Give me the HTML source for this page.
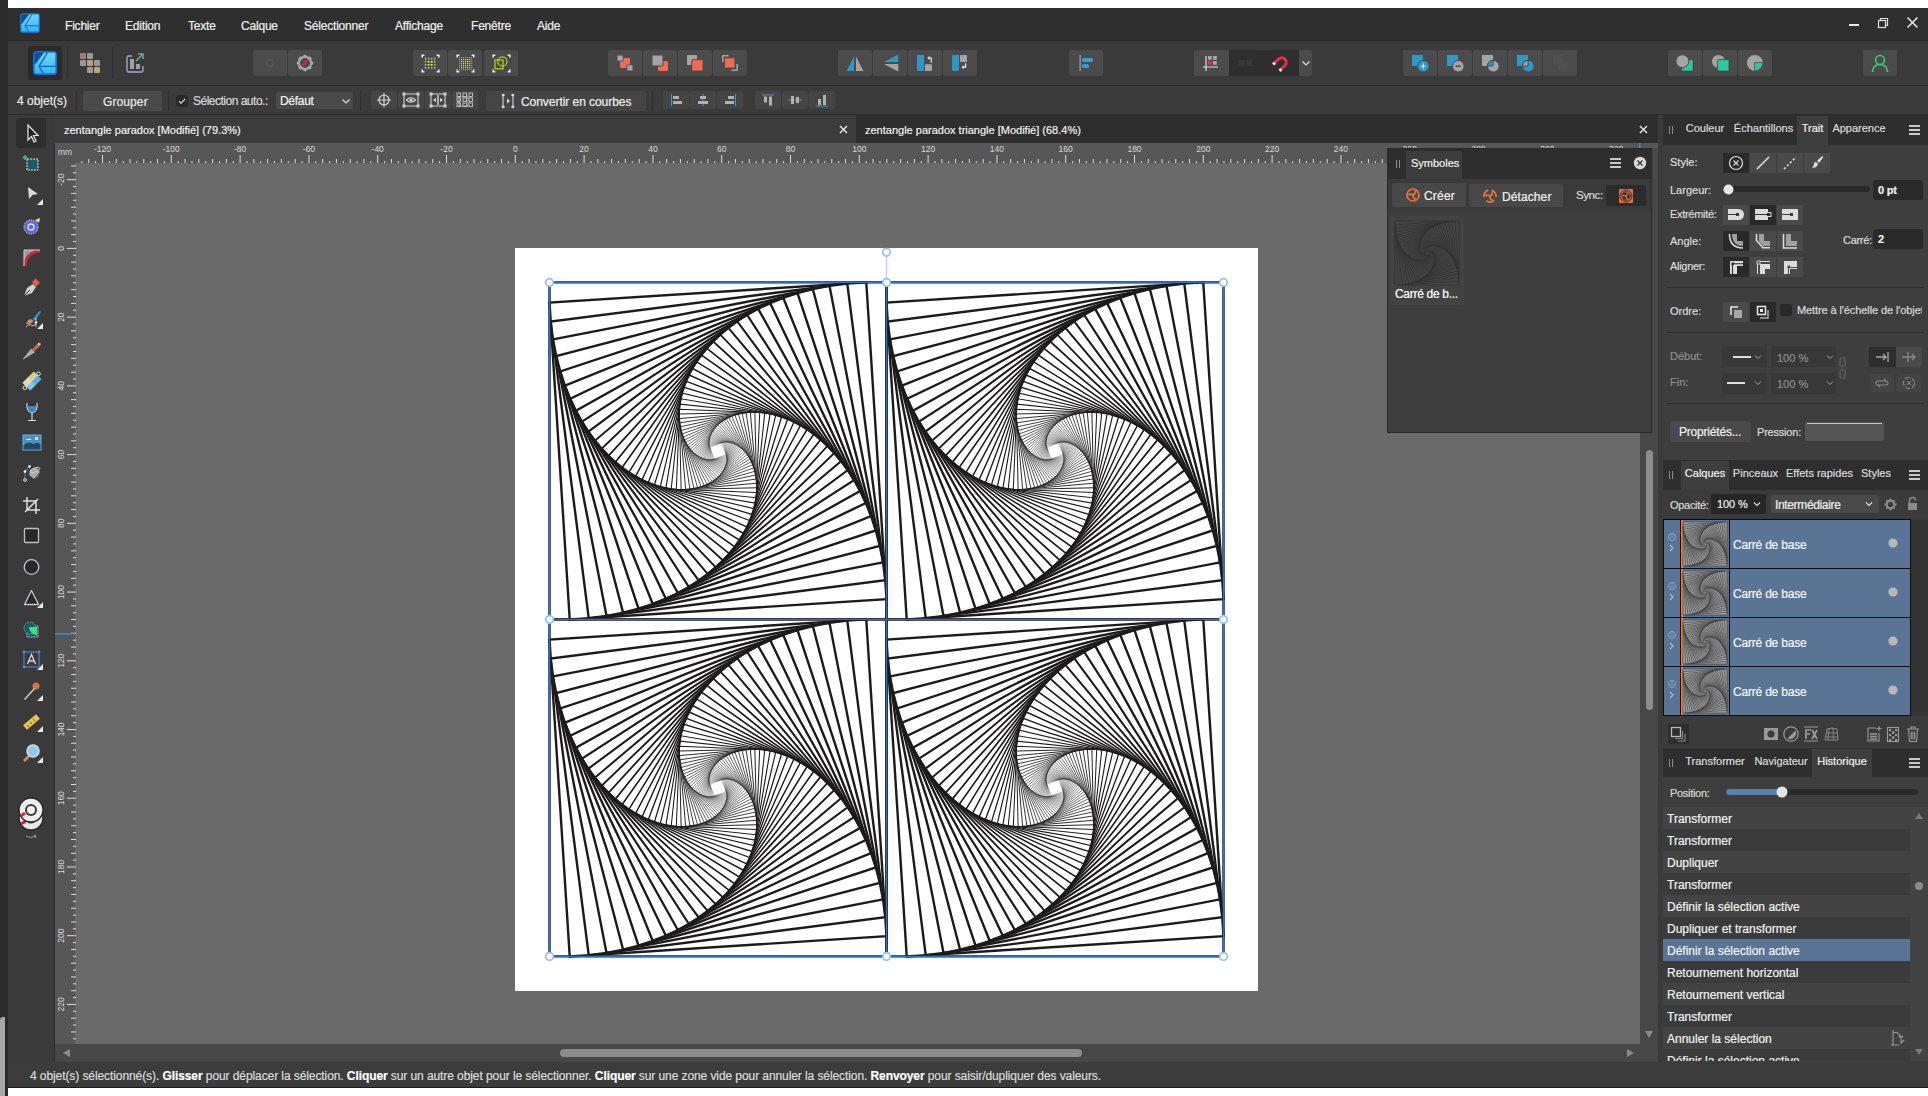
<!DOCTYPE html><html><head><meta charset="utf-8"><style>
html,body{margin:0;padding:0;width:1928px;height:1096px;overflow:hidden;background:#2b2b2b;font-family:"Liberation Sans",sans-serif;}
div{box-sizing:border-box;-webkit-text-stroke:0.2px currentColor;}
svg{position:absolute;overflow:visible}
</style></head><body><svg width="0" height="0" style="position:absolute;left:0;top:0"><defs><g id="tile" fill="none" stroke="#1c1a1a" stroke-linejoin="miter"><path d="M0.00,0.00 L0.00,337.00 L337.00,337.00 L337.00,0.00Z" stroke-width="2.400"/><path d="M0.00,20.22 L20.22,337.00 L337.00,316.78 L316.78,0.00Z" stroke-width="2.400"/><path d="M1.21,39.23 L39.23,335.79 L335.79,297.77 L297.77,1.21Z" stroke-width="2.400"/><path d="M3.49,57.02 L57.02,333.51 L333.51,279.98 L279.98,3.49Z" stroke-width="2.400"/><path d="M6.71,73.61 L73.61,330.29 L330.29,263.39 L263.39,6.71Z" stroke-width="2.400"/><path d="M10.72,89.01 L89.01,326.28 L326.28,247.99 L247.99,10.72Z" stroke-width="2.400"/><path d="M15.42,103.25 L103.25,321.58 L321.58,233.75 L233.75,15.42Z" stroke-width="2.400"/><path d="M20.69,116.35 L116.35,316.31 L316.31,220.65 L220.65,20.69Z" stroke-width="2.400"/><path d="M26.43,128.34 L128.34,310.57 L310.57,208.66 L208.66,26.43Z" stroke-width="2.296"/><path d="M32.54,139.28 L139.28,304.46 L304.46,197.72 L197.72,32.54Z" stroke-width="2.182"/><path d="M38.95,149.19 L149.19,298.05 L298.05,187.81 L187.81,38.95Z" stroke-width="2.074"/><path d="M45.56,158.12 L158.12,291.44 L291.44,178.88 L178.88,45.56Z" stroke-width="1.971"/><path d="M52.31,166.12 L166.12,284.69 L284.69,170.88 L170.88,52.31Z" stroke-width="1.873"/><path d="M59.14,173.23 L173.23,277.86 L277.86,163.77 L163.77,59.14Z" stroke-width="1.780"/><path d="M65.99,179.51 L179.51,271.01 L271.01,157.49 L157.49,65.99Z" stroke-width="1.692"/><path d="M72.80,185.00 L185.00,264.20 L264.20,152.00 L152.00,72.80Z" stroke-width="1.608"/><path d="M79.53,189.75 L189.75,257.47 L257.47,147.25 L147.25,79.53Z" stroke-width="1.528"/><path d="M86.14,193.82 L193.82,250.86 L250.86,143.18 L143.18,86.14Z" stroke-width="1.452"/><path d="M92.61,197.24 L197.24,244.39 L244.39,139.76 L139.76,92.61Z" stroke-width="1.380"/><path d="M98.88,200.07 L200.07,238.12 L238.12,136.93 L136.93,98.88Z" stroke-width="1.312"/><path d="M104.95,202.35 L202.35,232.05 L232.05,134.65 L134.65,104.95Z" stroke-width="1.247"/><path d="M110.80,204.13 L204.13,226.20 L226.20,132.87 L132.87,110.80Z" stroke-width="1.185"/><path d="M116.40,205.46 L205.46,220.60 L220.60,131.54 L131.54,116.40Z" stroke-width="1.126"/><path d="M121.74,206.37 L206.37,215.26 L215.26,130.63 L130.63,121.74Z" stroke-width="1.070"/><path d="M126.82,206.90 L206.90,210.18 L210.18,130.10 L130.10,126.82Z" stroke-width="1.017"/><path d="M131.62,207.10 L207.10,205.38 L205.38,129.90 L129.90,131.62Z" stroke-width="0.967"/><path d="M136.15,206.99 L206.99,200.85 L200.85,130.01 L130.01,136.15Z" stroke-width="0.919"/><path d="M140.40,206.62 L206.62,196.60 L196.60,130.38 L130.38,140.40Z" stroke-width="0.873"/><path d="M144.38,206.02 L206.02,192.62 L192.62,130.98 L130.98,144.38Z" stroke-width="0.830"/><path d="M148.07,205.22 L205.22,188.93 L188.93,131.78 L131.78,148.07Z" stroke-width="0.789"/><path d="M151.50,204.24 L204.24,185.50 L185.50,132.76 L132.76,151.50Z" stroke-width="0.750"/><path d="M154.67,203.12 L203.12,182.33 L182.33,133.88 L133.88,154.67Z" stroke-width="0.713"/><path d="M157.57,201.87 L201.87,179.43 L179.43,135.13 L135.13,157.57Z" stroke-width="0.677"/><path d="M160.23,200.52 L200.52,176.77 L176.77,136.48 L136.48,160.23Z" stroke-width="0.644"/><path d="M162.65,199.10 L199.10,174.35 L174.35,137.90 L137.90,162.65Z" stroke-width="0.612"/><path d="M164.84,197.61 L197.61,172.16 L172.16,139.39 L139.39,164.84Z" stroke-width="0.581"/><path d="M166.80,196.09 L196.09,170.20 L170.20,140.91 L140.91,166.80Z" stroke-width="0.553"/><path d="M168.56,194.53 L194.53,168.44 L168.44,142.47 L142.47,168.56Z" stroke-width="0.525"/><path d="M170.12,192.97 L192.97,166.88 L166.88,144.03 L144.03,170.12Z" stroke-width="0.499"/><path d="M171.49,191.40 L191.40,165.51 L165.51,145.60 L145.60,171.49Z" stroke-width="0.474"/><path d="M172.68,189.85 L189.85,164.32 L164.32,147.15 L147.15,172.68Z" stroke-width="0.451"/><path d="M173.71,188.32 L188.32,163.29 L163.29,148.68 L148.68,173.71Z" stroke-width="0.428"/><path d="M174.59,186.81 L186.81,162.41 L162.41,150.19 L150.19,174.59Z" stroke-width="0.407"/><path d="M175.32,185.35 L185.35,161.68 L161.68,151.65 L151.65,175.32Z" stroke-width="0.387"/><path d="M175.93,183.93 L183.93,161.07 L161.07,153.07 L153.07,175.93Z" stroke-width="0.368"/><path d="M176.41,182.56 L182.56,160.59 L160.59,154.44 L154.44,176.41Z" stroke-width="0.350"/><path d="M176.77,181.24 L181.24,160.23 L160.23,155.76 L155.76,176.77Z" stroke-width="0.332"/><path d="M177.04,179.98 L179.98,159.96 L159.96,157.02 L157.02,177.04Z" stroke-width="0.316"/><path d="M177.22,178.78 L178.78,159.78 L159.78,158.22 L158.22,177.22Z" stroke-width="0.300"/><path d="M177.31,177.64 L177.64,159.69 L159.69,159.36 L159.36,177.31Z" stroke-width="0.285"/><path d="M177.33,176.56 L176.56,159.67 L159.67,160.44 L160.44,177.33Z" stroke-width="0.271"/><path d="M177.29,175.55 L175.55,159.71 L159.71,161.45 L161.45,177.29Z" stroke-width="0.258"/><path d="M177.18,174.60 L174.60,159.82 L159.82,162.40 L162.40,177.18Z" stroke-width="0.245"/><path d="M177.03,173.71 L173.71,159.97 L159.97,163.29 L163.29,177.03Z" stroke-width="0.233"/><path d="M176.83,172.89 L172.89,160.17 L160.17,164.11 L164.11,176.83Z" stroke-width="0.221"/><path d="M176.59,172.12 L172.12,160.41 L160.41,164.88 L164.88,176.59Z" stroke-width="0.210"/></g><g id="tileg" fill="none" stroke="#202020" stroke-linejoin="miter"><path d="M0.00,0.00 L0.00,337.00 L337.00,337.00 L337.00,0.00Z" stroke-width="4.000"/><path d="M0.00,20.22 L20.22,337.00 L337.00,316.78 L316.78,0.00Z" stroke-width="4.000"/><path d="M1.21,39.23 L39.23,335.79 L335.79,297.77 L297.77,1.21Z" stroke-width="4.000"/><path d="M3.49,57.02 L57.02,333.51 L333.51,279.98 L279.98,3.49Z" stroke-width="4.000"/><path d="M6.71,73.61 L73.61,330.29 L330.29,263.39 L263.39,6.71Z" stroke-width="4.000"/><path d="M10.72,89.01 L89.01,326.28 L326.28,247.99 L247.99,10.72Z" stroke-width="4.000"/><path d="M15.42,103.25 L103.25,321.58 L321.58,233.75 L233.75,15.42Z" stroke-width="4.000"/><path d="M20.69,116.35 L116.35,316.31 L316.31,220.65 L220.65,20.69Z" stroke-width="4.000"/><path d="M26.43,128.34 L128.34,310.57 L310.57,208.66 L208.66,26.43Z" stroke-width="3.826"/><path d="M32.54,139.28 L139.28,304.46 L304.46,197.72 L197.72,32.54Z" stroke-width="3.636"/><path d="M38.95,149.19 L149.19,298.05 L298.05,187.81 L187.81,38.95Z" stroke-width="3.456"/><path d="M45.56,158.12 L158.12,291.44 L291.44,178.88 L178.88,45.56Z" stroke-width="3.285"/><path d="M52.31,166.12 L166.12,284.69 L284.69,170.88 L170.88,52.31Z" stroke-width="3.122"/><path d="M59.14,173.23 L173.23,277.86 L277.86,163.77 L163.77,59.14Z" stroke-width="2.967"/><path d="M65.99,179.51 L179.51,271.01 L271.01,157.49 L157.49,65.99Z" stroke-width="2.820"/><path d="M72.80,185.00 L185.00,264.20 L264.20,152.00 L152.00,72.80Z" stroke-width="2.680"/><path d="M79.53,189.75 L189.75,257.47 L257.47,147.25 L147.25,79.53Z" stroke-width="2.547"/><path d="M86.14,193.82 L193.82,250.86 L250.86,143.18 L143.18,86.14Z" stroke-width="2.421"/><path d="M92.61,197.24 L197.24,244.39 L244.39,139.76 L139.76,92.61Z" stroke-width="2.301"/><path d="M98.88,200.07 L200.07,238.12 L238.12,136.93 L136.93,98.88Z" stroke-width="2.187"/><path d="M104.95,202.35 L202.35,232.05 L232.05,134.65 L134.65,104.95Z" stroke-width="2.078"/><path d="M110.80,204.13 L204.13,226.20 L226.20,132.87 L132.87,110.80Z" stroke-width="1.975"/><path d="M116.40,205.46 L205.46,220.60 L220.60,131.54 L131.54,116.40Z" stroke-width="1.877"/><path d="M121.74,206.37 L206.37,215.26 L215.26,130.63 L130.63,121.74Z" stroke-width="1.784"/><path d="M126.82,206.90 L206.90,210.18 L210.18,130.10 L130.10,126.82Z" stroke-width="1.696"/><path d="M131.62,207.10 L207.10,205.38 L205.38,129.90 L129.90,131.62Z" stroke-width="1.611"/><path d="M136.15,206.99 L206.99,200.85 L200.85,130.01 L130.01,136.15Z" stroke-width="1.532"/><path d="M140.40,206.62 L206.62,196.60 L196.60,130.38 L130.38,140.40Z" stroke-width="1.456"/><path d="M144.38,206.02 L206.02,192.62 L192.62,130.98 L130.98,144.38Z" stroke-width="1.383"/><path d="M148.07,205.22 L205.22,188.93 L188.93,131.78 L131.78,148.07Z" stroke-width="1.315"/><path d="M151.50,204.24 L204.24,185.50 L185.50,132.76 L132.76,151.50Z" stroke-width="1.250"/><path d="M154.67,203.12 L203.12,182.33 L182.33,133.88 L133.88,154.67Z" stroke-width="1.188"/><path d="M157.57,201.87 L201.87,179.43 L179.43,135.13 L135.13,157.57Z" stroke-width="1.129"/><path d="M160.23,200.52 L200.52,176.77 L176.77,136.48 L136.48,160.23Z" stroke-width="1.073"/><path d="M162.65,199.10 L199.10,174.35 L174.35,137.90 L137.90,162.65Z" stroke-width="1.020"/><path d="M164.84,197.61 L197.61,172.16 L172.16,139.39 L139.39,164.84Z" stroke-width="0.969"/><path d="M166.80,196.09 L196.09,170.20 L170.20,140.91 L140.91,166.80Z" stroke-width="0.921"/><path d="M168.56,194.53 L194.53,168.44 L168.44,142.47 L142.47,168.56Z" stroke-width="0.875"/><path d="M170.12,192.97 L192.97,166.88 L166.88,144.03 L144.03,170.12Z" stroke-width="0.832"/><path d="M171.49,191.40 L191.40,165.51 L165.51,145.60 L145.60,171.49Z" stroke-width="0.791"/><path d="M172.68,189.85 L189.85,164.32 L164.32,147.15 L147.15,172.68Z" stroke-width="0.751"/><path d="M173.71,188.32 L188.32,163.29 L163.29,148.68 L148.68,173.71Z" stroke-width="0.714"/><path d="M174.59,186.81 L186.81,162.41 L162.41,150.19 L150.19,174.59Z" stroke-width="0.679"/><path d="M175.32,185.35 L185.35,161.68 L161.68,151.65 L151.65,175.32Z" stroke-width="0.645"/><path d="M175.93,183.93 L183.93,161.07 L161.07,153.07 L153.07,175.93Z" stroke-width="0.613"/><path d="M176.41,182.56 L182.56,160.59 L160.59,154.44 L154.44,176.41Z" stroke-width="0.583"/><path d="M176.77,181.24 L181.24,160.23 L160.23,155.76 L155.76,176.77Z" stroke-width="0.554"/><path d="M177.04,179.98 L179.98,159.96 L159.96,157.02 L157.02,177.04Z" stroke-width="0.526"/><path d="M177.22,178.78 L178.78,159.78 L159.78,158.22 L158.22,177.22Z" stroke-width="0.500"/><path d="M177.31,177.64 L177.64,159.69 L159.69,159.36 L159.36,177.31Z" stroke-width="0.475"/><path d="M177.33,176.56 L176.56,159.67 L159.67,160.44 L160.44,177.33Z" stroke-width="0.452"/><path d="M177.29,175.55 L175.55,159.71 L159.71,161.45 L161.45,177.29Z" stroke-width="0.429"/><path d="M177.18,174.60 L174.60,159.82 L159.82,162.40 L162.40,177.18Z" stroke-width="0.408"/><path d="M177.03,173.71 L173.71,159.97 L159.97,163.29 L163.29,177.03Z" stroke-width="0.388"/><path d="M176.83,172.89 L172.89,160.17 L160.17,164.11 L164.11,176.83Z" stroke-width="0.369"/><path d="M176.59,172.12 L172.12,160.41 L160.41,164.88 L164.88,176.59Z" stroke-width="0.350"/></g><g id="tileg2" fill="none" stroke="#404040" stroke-linejoin="miter"><path d="M0.00,0.00 L0.00,337.00 L337.00,337.00 L337.00,0.00Z" stroke-width="5.000"/><path d="M0.00,20.22 L20.22,337.00 L337.00,316.78 L316.78,0.00Z" stroke-width="5.000"/><path d="M1.21,39.23 L39.23,335.79 L335.79,297.77 L297.77,1.21Z" stroke-width="5.000"/><path d="M3.49,57.02 L57.02,333.51 L333.51,279.98 L279.98,3.49Z" stroke-width="5.000"/><path d="M6.71,73.61 L73.61,330.29 L330.29,263.39 L263.39,6.71Z" stroke-width="5.000"/><path d="M10.72,89.01 L89.01,326.28 L326.28,247.99 L247.99,10.72Z" stroke-width="5.000"/><path d="M15.42,103.25 L103.25,321.58 L321.58,233.75 L233.75,15.42Z" stroke-width="5.000"/><path d="M20.69,116.35 L116.35,316.31 L316.31,220.65 L220.65,20.69Z" stroke-width="5.000"/><path d="M26.43,128.34 L128.34,310.57 L310.57,208.66 L208.66,26.43Z" stroke-width="4.783"/><path d="M32.54,139.28 L139.28,304.46 L304.46,197.72 L197.72,32.54Z" stroke-width="4.545"/><path d="M38.95,149.19 L149.19,298.05 L298.05,187.81 L187.81,38.95Z" stroke-width="4.320"/><path d="M45.56,158.12 L158.12,291.44 L291.44,178.88 L178.88,45.56Z" stroke-width="4.106"/><path d="M52.31,166.12 L166.12,284.69 L284.69,170.88 L170.88,52.31Z" stroke-width="3.902"/><path d="M59.14,173.23 L173.23,277.86 L277.86,163.77 L163.77,59.14Z" stroke-width="3.709"/><path d="M65.99,179.51 L179.51,271.01 L271.01,157.49 L157.49,65.99Z" stroke-width="3.525"/><path d="M72.80,185.00 L185.00,264.20 L264.20,152.00 L152.00,72.80Z" stroke-width="3.350"/><path d="M79.53,189.75 L189.75,257.47 L257.47,147.25 L147.25,79.53Z" stroke-width="3.184"/><path d="M86.14,193.82 L193.82,250.86 L250.86,143.18 L143.18,86.14Z" stroke-width="3.026"/><path d="M92.61,197.24 L197.24,244.39 L244.39,139.76 L139.76,92.61Z" stroke-width="2.876"/><path d="M98.88,200.07 L200.07,238.12 L238.12,136.93 L136.93,98.88Z" stroke-width="2.733"/><path d="M104.95,202.35 L202.35,232.05 L232.05,134.65 L134.65,104.95Z" stroke-width="2.598"/><path d="M110.80,204.13 L204.13,226.20 L226.20,132.87 L132.87,110.80Z" stroke-width="2.469"/><path d="M116.40,205.46 L205.46,220.60 L220.60,131.54 L131.54,116.40Z" stroke-width="2.346"/><path d="M121.74,206.37 L206.37,215.26 L215.26,130.63 L130.63,121.74Z" stroke-width="2.230"/><path d="M126.82,206.90 L206.90,210.18 L210.18,130.10 L130.10,126.82Z" stroke-width="2.119"/><path d="M131.62,207.10 L207.10,205.38 L205.38,129.90 L129.90,131.62Z" stroke-width="2.014"/><path d="M136.15,206.99 L206.99,200.85 L200.85,130.01 L130.01,136.15Z" stroke-width="1.914"/><path d="M140.40,206.62 L206.62,196.60 L196.60,130.38 L130.38,140.40Z" stroke-width="1.819"/><path d="M144.38,206.02 L206.02,192.62 L192.62,130.98 L130.98,144.38Z" stroke-width="1.729"/><path d="M148.07,205.22 L205.22,188.93 L188.93,131.78 L131.78,148.07Z" stroke-width="1.643"/><path d="M151.50,204.24 L204.24,185.50 L185.50,132.76 L132.76,151.50Z" stroke-width="1.562"/><path d="M154.67,203.12 L203.12,182.33 L182.33,133.88 L133.88,154.67Z" stroke-width="1.484"/><path d="M157.57,201.87 L201.87,179.43 L179.43,135.13 L135.13,157.57Z" stroke-width="1.411"/><path d="M160.23,200.52 L200.52,176.77 L176.77,136.48 L136.48,160.23Z" stroke-width="1.341"/><path d="M162.65,199.10 L199.10,174.35 L174.35,137.90 L137.90,162.65Z" stroke-width="1.274"/><path d="M164.84,197.61 L197.61,172.16 L172.16,139.39 L139.39,164.84Z" stroke-width="1.211"/><path d="M166.80,196.09 L196.09,170.20 L170.20,140.91 L140.91,166.80Z" stroke-width="1.151"/><path d="M168.56,194.53 L194.53,168.44 L168.44,142.47 L142.47,168.56Z" stroke-width="1.094"/><path d="M170.12,192.97 L192.97,166.88 L166.88,144.03 L144.03,170.12Z" stroke-width="1.040"/><path d="M171.49,191.40 L191.40,165.51 L165.51,145.60 L145.60,171.49Z" stroke-width="0.988"/><path d="M172.68,189.85 L189.85,164.32 L164.32,147.15 L147.15,172.68Z" stroke-width="0.939"/><path d="M173.71,188.32 L188.32,163.29 L163.29,148.68 L148.68,173.71Z" stroke-width="0.893"/><path d="M174.59,186.81 L186.81,162.41 L162.41,150.19 L150.19,174.59Z" stroke-width="0.848"/><path d="M175.32,185.35 L185.35,161.68 L161.68,151.65 L151.65,175.32Z" stroke-width="0.806"/><path d="M175.93,183.93 L183.93,161.07 L161.07,153.07 L153.07,175.93Z" stroke-width="0.766"/><path d="M176.41,182.56 L182.56,160.59 L160.59,154.44 L154.44,176.41Z" stroke-width="0.728"/><path d="M176.77,181.24 L181.24,160.23 L160.23,155.76 L155.76,176.77Z" stroke-width="0.692"/><path d="M177.04,179.98 L179.98,159.96 L159.96,157.02 L157.02,177.04Z" stroke-width="0.658"/><path d="M177.22,178.78 L178.78,159.78 L159.78,158.22 L158.22,177.22Z" stroke-width="0.625"/><path d="M177.31,177.64 L177.64,159.69 L159.69,159.36 L159.36,177.31Z" stroke-width="0.594"/><path d="M177.33,176.56 L176.56,159.67 L159.67,160.44 L160.44,177.33Z" stroke-width="0.565"/><path d="M177.29,175.55 L175.55,159.71 L159.71,161.45 L161.45,177.29Z" stroke-width="0.537"/><path d="M177.18,174.60 L174.60,159.82 L159.82,162.40 L162.40,177.18Z" stroke-width="0.510"/><path d="M177.03,173.71 L173.71,159.97 L159.97,163.29 L163.29,177.03Z" stroke-width="0.485"/><path d="M176.83,172.89 L172.89,160.17 L160.17,164.11 L164.11,176.83Z" stroke-width="0.461"/><path d="M176.59,172.12 L172.12,160.41 L160.41,164.88 L164.88,176.59Z" stroke-width="0.438"/></g></defs></svg><div style="position:absolute;left:0px;top:0px;width:1928px;height:1096px;background:#2b2b2b;"></div><div style="position:absolute;left:8px;top:0px;width:1920px;height:8px;background:#ffffff;"></div><div style="position:absolute;left:8px;top:8px;width:1920px;height:32px;background:#2f2f2f;"></div><div style="position:absolute;left:8px;top:40px;width:1920px;height:1px;background:#262626;"></div><div style="position:absolute;left:8px;top:41px;width:1920px;height:44px;background:#3a3a3a;"></div><div style="position:absolute;left:8px;top:85px;width:1920px;height:1px;background:#2a2a2a;"></div><div style="position:absolute;left:8px;top:86px;width:1920px;height:28px;background:#3b3b3b;"></div><div style="position:absolute;left:8px;top:114px;width:1920px;height:1px;background:#2a2a2a;"></div><div style="position:absolute;left:8px;top:115px;width:47px;height:947px;background:#3a3a3a;"></div><div style="position:absolute;left:55px;top:115px;width:801px;height:28px;background:#3c3c3c;"></div><div style="position:absolute;left:856px;top:115px;width:802px;height:28px;background:#2e2e2e;"></div><div style="position:absolute;left:55px;top:143px;width:1603px;height:20px;background:#575757;"></div><div style="position:absolute;left:55px;top:163px;width:20px;height:881px;background:#575757;"></div><div style="position:absolute;left:75px;top:163px;width:1565px;height:881px;background:#6a6a6a;"></div><div style="position:absolute;left:1640px;top:163px;width:18px;height:899px;background:#474747;"></div><div style="position:absolute;left:55px;top:1044px;width:1603px;height:18px;background:#474747;"></div><div style="position:absolute;left:8px;top:1062px;width:1920px;height:25px;background:#3c3c3c;"></div><div style="position:absolute;left:8px;top:1087px;width:1920px;height:1px;background:#1a1a1a;"></div><div style="position:absolute;left:8px;top:1088px;width:1920px;height:8px;background:#ffffff;"></div><div style="position:absolute;left:1658px;top:115px;width:270px;height:947px;background:#3e3e3e;"></div><div style="position:absolute;left:515px;top:248px;width:743px;height:743px;background:#ffffff;"></div><svg style="left:0;top:0" width="1928" height="1096"><use href="#tile" transform="translate(549.5,282.4)"/><use href="#tile" transform="translate(886.5,282.4)"/><use href="#tile" transform="translate(549.5,619.4)"/><use href="#tile" transform="translate(886.5,619.4)"/></svg><svg style="left:20px;top:13px;" width="20" height="20" viewBox="0 0 20 20"><defs><linearGradient id="lg20" x1="0" y1="0" x2="0" y2="1"><stop offset="0" stop-color="#6fd8fd"/><stop offset="1" stop-color="#34b6f2"/></linearGradient></defs>
<rect x="0" y="0" width="20" height="20" rx="3.20" fill="#1b6fc8"/>
<path d="M1.40,1.40 H9.20 L1.40,11.60Z" fill="#0f4f94"/>
<path d="M9.20,1.40 H18.60 V18.60 H1.40 V11.60Z" fill="url(#lg20)"/>
<path d="M12.00,1.40 L5.00,12.80 L8.40,18.60 M5.00,12.80 H18.60" fill="none" stroke="#1560b8" stroke-width="1.00"/></svg><div style="position:absolute;left:65px;top:19.84px;font-size:12px;line-height:1;white-space:nowrap;color:#f0f0f0;letter-spacing:-0.2px;">Fichier</div><div style="position:absolute;left:125px;top:19.84px;font-size:12px;line-height:1;white-space:nowrap;color:#f0f0f0;letter-spacing:-0.2px;">Edition</div><div style="position:absolute;left:188px;top:19.84px;font-size:12px;line-height:1;white-space:nowrap;color:#f0f0f0;letter-spacing:-0.2px;">Texte</div><div style="position:absolute;left:241px;top:19.84px;font-size:12px;line-height:1;white-space:nowrap;color:#f0f0f0;letter-spacing:-0.2px;">Calque</div><div style="position:absolute;left:304px;top:19.84px;font-size:12px;line-height:1;white-space:nowrap;color:#f0f0f0;letter-spacing:-0.2px;">Sélectionner</div><div style="position:absolute;left:395px;top:19.84px;font-size:12px;line-height:1;white-space:nowrap;color:#f0f0f0;letter-spacing:-0.2px;">Affichage</div><div style="position:absolute;left:471px;top:19.84px;font-size:12px;line-height:1;white-space:nowrap;color:#f0f0f0;letter-spacing:-0.2px;">Fenêtre</div><div style="position:absolute;left:537px;top:19.84px;font-size:12px;line-height:1;white-space:nowrap;color:#f0f0f0;letter-spacing:-0.2px;">Aide</div><div style="position:absolute;left:1849px;top:24px;width:10px;height:2px;background:#e8e8e8;"></div><svg style="left:1877px;top:17px;" width="12" height="12" viewBox="0 0 12 12"><rect x="1.5" y="3.5" width="7" height="7" fill="none" stroke="#e0e0e0" stroke-width="1.2"/><path d="M3.5,3.5 V1.5 H10.5 V8.5 H8.5" fill="none" stroke="#e0e0e0" stroke-width="1.2"/></svg><svg style="left:1906px;top:16px;" width="13" height="13" viewBox="0 0 13 13"><path d="M1.5,1.5 L11.5,11.5 M11.5,1.5 L1.5,11.5" stroke="#e8e8e8" stroke-width="1.5"/></svg><div style="position:absolute;left:28px;top:46px;width:34px;height:34px;background:#2b2b2b;border-radius:2px;"></div><svg style="left:33px;top:51px;" width="24" height="24" viewBox="0 0 24 24"><defs><linearGradient id="lg33" x1="0" y1="0" x2="0" y2="1"><stop offset="0" stop-color="#6fd8fd"/><stop offset="1" stop-color="#34b6f2"/></linearGradient></defs>
<rect x="0" y="0" width="24" height="24" rx="3.84" fill="#1b6fc8"/>
<path d="M1.68,1.68 H11.04 L1.68,13.92Z" fill="#0f4f94"/>
<path d="M11.04,1.68 H22.32 V22.32 H1.68 V13.92Z" fill="url(#lg33)"/>
<path d="M14.40,1.68 L6.00,15.36 L10.08,22.32 M6.00,15.36 H22.32" fill="none" stroke="#1560b8" stroke-width="1.20"/></svg><div style="position:absolute;left:67px;top:47px;width:1px;height:32px;background:#2e2e2e;"></div><div style="position:absolute;left:80px;top:53px;width:5.5px;height:5.5px;background:#a07a80;border-radius:1px;"></div><div style="position:absolute;left:87px;top:53px;width:5.5px;height:5.5px;background:#9a9a9a;border-radius:1px;"></div><div style="position:absolute;left:80px;top:60px;width:5.5px;height:5.5px;background:#9a9a9a;border-radius:1px;"></div><div style="position:absolute;left:87px;top:60px;width:5.5px;height:5.5px;background:#b8a080;border-radius:1px;"></div><div style="position:absolute;left:94px;top:60px;width:5.5px;height:5.5px;background:#9a9a9a;border-radius:1px;"></div><div style="position:absolute;left:87px;top:67px;width:5.5px;height:5.5px;background:#9a9a9a;border-radius:1px;"></div><div style="position:absolute;left:94px;top:67px;width:5.5px;height:5.5px;background:#b8a878;border-radius:1px;"></div><div style="position:absolute;left:112px;top:47px;width:1px;height:32px;background:#2e2e2e;"></div><svg style="left:124px;top:52px;" width="22" height="22" viewBox="0 0 22 22"><path d="M3,6 V18 Q3,20 5,20 H17 Q19,20 19,18 V14" fill="none" stroke="#8c8cb0" stroke-width="1.8"/><path d="M3,6 Q3,4 5,4 H8" fill="none" stroke="#8c8cb0" stroke-width="1.8"/><rect x="6" y="7" width="4" height="10" fill="#a0a0a0"/><rect x="12" y="12" width="4" height="5" fill="#a0a0a0"/><path d="M12,9 L19,2 M14,2 H19 V7" fill="none" stroke="#6fa090" stroke-width="1.6"/></svg><div style="position:absolute;left:253px;top:50px;width:34px;height:26px;background:#4b4b4b;border-radius:2px;"></div><div style="position:absolute;left:288px;top:50px;width:34px;height:26px;background:#4b4b4b;border-radius:2px;"></div><svg style="left:262px;top:55px;" width="16" height="16" viewBox="0 0 16 16"><circle cx="8" cy="8" r="3.5" fill="none" stroke="#585858" stroke-width="1.5"/></svg><svg style="left:296px;top:54px;" width="18" height="18" viewBox="0 0 18 18"><circle cx="9" cy="9" r="6.2" fill="none" stroke="#a8a8a8" stroke-width="2.2"/><g fill="#a8a8a8"><rect x="7.5" y="0.8" width="3" height="3.2" transform="rotate(0 9 9)"/><rect x="7.5" y="0.8" width="3" height="3.2" transform="rotate(45 9 9)"/><rect x="7.5" y="0.8" width="3" height="3.2" transform="rotate(90 9 9)"/><rect x="7.5" y="0.8" width="3" height="3.2" transform="rotate(135 9 9)"/><rect x="7.5" y="0.8" width="3" height="3.2" transform="rotate(180 9 9)"/><rect x="7.5" y="0.8" width="3" height="3.2" transform="rotate(225 9 9)"/><rect x="7.5" y="0.8" width="3" height="3.2" transform="rotate(270 9 9)"/><rect x="7.5" y="0.8" width="3" height="3.2" transform="rotate(315 9 9)"/></g><path d="M6.3,11.7 L11.7,6.3" stroke="#e8203c" stroke-width="2.2"/></svg><div style="position:absolute;left:413px;top:50px;width:34px;height:26px;background:#4b4b4b;border-radius:2px;"></div><div style="position:absolute;left:448px;top:50px;width:34px;height:26px;background:#4b4b4b;border-radius:2px;"></div><div style="position:absolute;left:484px;top:50px;width:34px;height:26px;background:#4b4b4b;border-radius:2px;"></div><svg style="left:421px;top:54px;" width="19" height="19" viewBox="0 0 19 19"><path d="M1.2,3.4 V1.2 H3.4 M15.6,1.2 H17.8 V3.4 M17.8,15.6 V17.8 H15.6 M3.4,17.8 H1.2 V15.6" fill="none" stroke="#e8e8e8" stroke-width="1.6"/><rect x="3.70" y="3.80" width="1.75" height="1.75" fill="#a8a8a8"/><rect x="3.70" y="6.85" width="1.75" height="1.75" fill="#a8a8a8"/><rect x="3.70" y="9.90" width="1.75" height="1.75" fill="#a8a8a8"/><rect x="3.70" y="12.95" width="1.75" height="1.75" fill="#a8a8a8"/><rect x="6.75" y="3.80" width="1.75" height="1.75" fill="#a8a8a8"/><rect x="6.75" y="6.85" width="1.75" height="1.75" fill="#f0f830"/><rect x="6.75" y="9.90" width="1.75" height="1.75" fill="#f0f830"/><rect x="6.75" y="12.95" width="1.75" height="1.75" fill="#a8a8a8"/><rect x="9.80" y="3.80" width="1.75" height="1.75" fill="#a8a8a8"/><rect x="9.80" y="6.85" width="1.75" height="1.75" fill="#f0f830"/><rect x="9.80" y="9.90" width="1.75" height="1.75" fill="#f0f830"/><rect x="9.80" y="12.95" width="1.75" height="1.75" fill="#a8a8a8"/><rect x="12.85" y="3.80" width="1.75" height="1.75" fill="#a8a8a8"/><rect x="12.85" y="6.85" width="1.75" height="1.75" fill="#a8a8a8"/><rect x="12.85" y="9.90" width="1.75" height="1.75" fill="#a8a8a8"/><rect x="12.85" y="12.95" width="1.75" height="1.75" fill="#a8a8a8"/></svg><svg style="left:456px;top:54px;" width="19" height="19" viewBox="0 0 19 19"><path d="M1.2,3.4 V1.2 H3.4 M15.6,1.2 H17.8 V3.4 M17.8,15.6 V17.8 H15.6 M3.4,17.8 H1.2 V15.6" fill="none" stroke="#e8e8e8" stroke-width="1.6"/><rect x="3.00" y="3.10" width="1.1" height="1.1" fill="#a0a0a0"/><rect x="3.00" y="5.12" width="1.1" height="1.1" fill="#a0a0a0"/><rect x="3.00" y="7.14" width="1.1" height="1.1" fill="#a0a0a0"/><rect x="3.00" y="9.16" width="1.1" height="1.1" fill="#a0a0a0"/><rect x="3.00" y="11.18" width="1.1" height="1.1" fill="#a0a0a0"/><rect x="3.00" y="13.20" width="1.1" height="1.1" fill="#a0a0a0"/><rect x="3.00" y="15.22" width="1.1" height="1.1" fill="#a0a0a0"/><rect x="5.02" y="3.10" width="1.1" height="1.1" fill="#a0a0a0"/><rect x="5.02" y="5.12" width="1.1" height="1.1" fill="#f0f830"/><rect x="5.02" y="7.14" width="1.1" height="1.1" fill="#f0f830"/><rect x="5.02" y="9.16" width="1.1" height="1.1" fill="#f0f830"/><rect x="5.02" y="11.18" width="1.1" height="1.1" fill="#f0f830"/><rect x="5.02" y="13.20" width="1.1" height="1.1" fill="#f0f830"/><rect x="5.02" y="15.22" width="1.1" height="1.1" fill="#a0a0a0"/><rect x="7.04" y="3.10" width="1.1" height="1.1" fill="#a0a0a0"/><rect x="7.04" y="5.12" width="1.1" height="1.1" fill="#f0f830"/><rect x="7.04" y="7.14" width="1.1" height="1.1" fill="#f0f830"/><rect x="7.04" y="9.16" width="1.1" height="1.1" fill="#f0f830"/><rect x="7.04" y="11.18" width="1.1" height="1.1" fill="#f0f830"/><rect x="7.04" y="13.20" width="1.1" height="1.1" fill="#f0f830"/><rect x="7.04" y="15.22" width="1.1" height="1.1" fill="#a0a0a0"/><rect x="9.06" y="3.10" width="1.1" height="1.1" fill="#a0a0a0"/><rect x="9.06" y="5.12" width="1.1" height="1.1" fill="#f0f830"/><rect x="9.06" y="7.14" width="1.1" height="1.1" fill="#f0f830"/><rect x="9.06" y="9.16" width="1.1" height="1.1" fill="#f0f830"/><rect x="9.06" y="11.18" width="1.1" height="1.1" fill="#f0f830"/><rect x="9.06" y="13.20" width="1.1" height="1.1" fill="#f0f830"/><rect x="9.06" y="15.22" width="1.1" height="1.1" fill="#a0a0a0"/><rect x="11.08" y="3.10" width="1.1" height="1.1" fill="#a0a0a0"/><rect x="11.08" y="5.12" width="1.1" height="1.1" fill="#f0f830"/><rect x="11.08" y="7.14" width="1.1" height="1.1" fill="#f0f830"/><rect x="11.08" y="9.16" width="1.1" height="1.1" fill="#f0f830"/><rect x="11.08" y="11.18" width="1.1" height="1.1" fill="#f0f830"/><rect x="11.08" y="13.20" width="1.1" height="1.1" fill="#f0f830"/><rect x="11.08" y="15.22" width="1.1" height="1.1" fill="#a0a0a0"/><rect x="13.10" y="3.10" width="1.1" height="1.1" fill="#a0a0a0"/><rect x="13.10" y="5.12" width="1.1" height="1.1" fill="#f0f830"/><rect x="13.10" y="7.14" width="1.1" height="1.1" fill="#f0f830"/><rect x="13.10" y="9.16" width="1.1" height="1.1" fill="#f0f830"/><rect x="13.10" y="11.18" width="1.1" height="1.1" fill="#f0f830"/><rect x="13.10" y="13.20" width="1.1" height="1.1" fill="#f0f830"/><rect x="13.10" y="15.22" width="1.1" height="1.1" fill="#a0a0a0"/><rect x="15.12" y="3.10" width="1.1" height="1.1" fill="#a0a0a0"/><rect x="15.12" y="5.12" width="1.1" height="1.1" fill="#a0a0a0"/><rect x="15.12" y="7.14" width="1.1" height="1.1" fill="#a0a0a0"/><rect x="15.12" y="9.16" width="1.1" height="1.1" fill="#a0a0a0"/><rect x="15.12" y="11.18" width="1.1" height="1.1" fill="#a0a0a0"/><rect x="15.12" y="13.20" width="1.1" height="1.1" fill="#a0a0a0"/><rect x="15.12" y="15.22" width="1.1" height="1.1" fill="#a0a0a0"/></svg><svg style="left:492px;top:54px;" width="19" height="19" viewBox="0 0 19 19"><path d="M1.2,3.4 V1.2 H3.4 M15.6,1.2 H17.8 V3.4 M17.8,15.6 V17.8 H15.6 M3.4,17.8 H1.2 V15.6" fill="none" stroke="#e8e8e8" stroke-width="1.6"/><rect x="3" y="6" width="8" height="8.8" fill="none" stroke="#c0d020" stroke-width="1.2"/><circle cx="10.4" cy="7.4" r="4.6" fill="none" stroke="#c0d020" stroke-width="1.2"/></svg><div style="position:absolute;left:608px;top:50px;width:34px;height:26px;background:#4b4b4b;border-radius:2px;"></div><div style="position:absolute;left:643px;top:50px;width:34px;height:26px;background:#4b4b4b;border-radius:2px;"></div><div style="position:absolute;left:678px;top:50px;width:34px;height:26px;background:#4b4b4b;border-radius:2px;"></div><div style="position:absolute;left:713px;top:50px;width:34px;height:26px;background:#4b4b4b;border-radius:2px;"></div><svg style="left:616px;top:54px;" width="18" height="18" viewBox="0 0 18 18"><rect x="4" y="4" width="10" height="10" rx="1" fill="#f26a50"/><rect x="1" y="1" width="6.2" height="6.2" rx="1" fill="#a4a4a4" stroke="#4b4b4b" stroke-width="0.9"/><rect x="10.8" y="10.8" width="6.2" height="6.2" rx="1" fill="#a4a4a4" stroke="#4b4b4b" stroke-width="0.9"/></svg><svg style="left:651px;top:54px;" width="18" height="18" viewBox="0 0 18 18"><rect x="7" y="7" width="10" height="10" rx="1" fill="#f26a50"/><rect x="1" y="1" width="11" height="11" rx="1" fill="#a4a4a4" stroke="#4b4b4b" stroke-width="1"/></svg><svg style="left:686px;top:54px;" width="18" height="18" viewBox="0 0 18 18"><rect x="1" y="1" width="10" height="10" rx="1" fill="#a4a4a4"/><rect x="5.7" y="5.7" width="11.4" height="11.3" rx="1" fill="#f26a50" stroke="#4b4b4b" stroke-width="1"/></svg><svg style="left:721px;top:54px;" width="18" height="18" viewBox="0 0 18 18"><path d="M1.8,8 V2.3 Q1.8,1.8 2.3,1.8 H7.5" fill="none" stroke="#a4a4a4" stroke-width="1.6"/><path d="M16.2,10 V15.7 Q16.2,16.2 15.7,16.2 H10.5" fill="none" stroke="#a4a4a4" stroke-width="1.6"/><rect x="3.5" y="3.8" width="10.5" height="10.3" rx="1" fill="#f26a50" stroke="#4b4b4b" stroke-width="1"/></svg><div style="position:absolute;left:838px;top:50px;width:34px;height:26px;background:#4b4b4b;border-radius:2px;"></div><div style="position:absolute;left:873px;top:50px;width:34px;height:26px;background:#4b4b4b;border-radius:2px;"></div><div style="position:absolute;left:908px;top:50px;width:34px;height:26px;background:#4b4b4b;border-radius:2px;"></div><div style="position:absolute;left:943px;top:50px;width:34px;height:26px;background:#4b4b4b;border-radius:2px;"></div><svg style="left:846px;top:54px;" width="18" height="18" viewBox="0 0 18 18"><path d="M8,2.4 L0.6,17 H8Z" fill="#2b98c8"/><path d="M10,2.4 L17.4,17 H10Z" fill="#a4a4a4"/></svg><svg style="left:881px;top:54px;" width="18" height="18" viewBox="0 0 18 18"><path d="M17.3,0.6 L2.7,8 H17.3Z" fill="#2b98c8"/><path d="M2.7,10 H17.3 V17.4Z" fill="#a4a4a4"/></svg><svg style="left:916px;top:54px;" width="18" height="18" viewBox="0 0 18 18"><rect x="1" y="1.1" width="7.1" height="15.8" rx="1" fill="#2b98c8"/><rect x="9" y="10.2" width="7" height="6.7" rx="0.6" fill="#a4a4a4"/><path d="M15.3,8.7 V4 H12" fill="none" stroke="#e8e8e8" stroke-width="1.2"/><path d="M13.6,2 L11.3,4 L13.6,6Z" fill="#e8e8e8"/></svg><svg style="left:951px;top:54px;" width="18" height="18" viewBox="0 0 18 18"><rect x="1.1" y="1.1" width="6.9" height="15.8" rx="1" fill="#2b98c8"/><rect x="9" y="1.1" width="7" height="6.8" rx="0.6" fill="#a4a4a4"/><path d="M14.6,9.3 V13.2 H11.2" fill="none" stroke="#e8e8e8" stroke-width="1.2"/><path d="M12.8,11.2 L10.5,13.2 L12.8,15.2Z" fill="#e8e8e8"/></svg><div style="position:absolute;left:1069px;top:50px;width:34px;height:26px;background:#4b4b4b;border-radius:2px;"></div><svg style="left:1077px;top:54px;" width="18" height="18" viewBox="0 0 18 18"><rect x="2.5" y="1" width="1.2" height="16" fill="#a4a4a4"/><rect x="5" y="4" width="11" height="4" rx="1.5" fill="#2ea0d0"/><rect x="5" y="10" width="7" height="4" rx="1.5" fill="#2ea0d0"/></svg><div style="position:absolute;left:1194px;top:50px;width:35px;height:26px;background:#4b4b4b;border-radius:2px;"></div><div style="position:absolute;left:1229px;top:50px;width:35px;height:26px;background:#2e2e2e;border-radius:2px;"></div><div style="position:absolute;left:1264px;top:50px;width:35px;height:26px;background:#2e2e2e;border-radius:2px;"></div><div style="position:absolute;left:1299px;top:50px;width:13px;height:26px;background:#4b4b4b;border-radius:2px;"></div><svg style="left:1202px;top:54px;" width="18" height="18" viewBox="0 0 18 18"><path d="M4,2V17 M1,13H16" stroke="#e0e0e0" stroke-width="1.2"/><rect x="6" y="2" width="3.8" height="3.8" fill="#a4a4a4"/><rect x="11" y="2" width="3.8" height="3.8" fill="#a4a4a4"/><rect x="6" y="7" width="3.8" height="3.8" fill="#e0304a"/><rect x="11" y="7" width="3.8" height="3.8" fill="#a4a4a4"/></svg><svg style="left:1237px;top:54px;" width="18" height="18" viewBox="0 0 18 18"><rect x="1" y="6" width="7" height="6" fill="#383838"/><path d="M9,6H17L14,9L17,12H9Z" fill="#383838"/></svg><svg style="left:1272px;top:54px;" width="18" height="18" viewBox="0 0 18 18"><g transform="rotate(45 9 9)"><path d="M4.5,13 V8 A4.5,4.5 0 0 1 13.5,8 V13" fill="none" stroke="#e0304a" stroke-width="3"/><rect x="3" y="13" width="3" height="2.6" fill="#e8e8e8"/><rect x="12" y="13" width="3" height="2.6" fill="#e8e8e8"/></g></svg><svg style="left:1300px;top:57px;" width="12" height="12" viewBox="0 0 12 12"><path d="M2.5,4.5 L6,8 L9.5,4.5" fill="none" stroke="#e0e0e0" stroke-width="1.2"/></svg><div style="position:absolute;left:1403px;top:50px;width:34px;height:26px;background:#4b4b4b;border-radius:2px;"></div><div style="position:absolute;left:1438px;top:50px;width:34px;height:26px;background:#4b4b4b;border-radius:2px;"></div><div style="position:absolute;left:1473px;top:50px;width:34px;height:26px;background:#4b4b4b;border-radius:2px;"></div><div style="position:absolute;left:1508px;top:50px;width:34px;height:26px;background:#4b4b4b;border-radius:2px;"></div><div style="position:absolute;left:1543px;top:50px;width:34px;height:26px;background:#4b4b4b;border-radius:2px;"></div><svg style="left:1411px;top:54px;" width="18" height="18" viewBox="0 0 18 18"><rect x="1" y="1" width="11" height="11" fill="#2b9ac8"/><circle cx="12.3" cy="12.2" r="5.8" fill="#2b9ac8" stroke="#4b4b4b" stroke-width="1"/><path d="M12.3,9.6V14.8M9.7,12.2H14.9" stroke="#e8e8e8" stroke-width="1.1"/></svg><svg style="left:1446px;top:54px;" width="18" height="18" viewBox="0 0 18 18"><rect x="1" y="1" width="11" height="11" fill="#2b9ac8"/><circle cx="12.3" cy="12.2" r="5.8" fill="#a4a4a4" stroke="#4b4b4b" stroke-width="1"/><path d="M9.7,12.2H14.9" stroke="#3a3a3a" stroke-width="1.2"/></svg><svg style="left:1481px;top:54px;" width="18" height="18" viewBox="0 0 18 18"><rect x="1" y="1" width="11" height="11" fill="#a4a4a4"/><circle cx="12.3" cy="12.2" r="5.8" fill="#a4a4a4" stroke="#4b4b4b" stroke-width="1"/><path d="M6.5,12 A5.8,5.8 0 0 1 12,6.4 V12Z" fill="#2b9ac8" stroke="#3a3a3a" stroke-width="0.8"/></svg><svg style="left:1516px;top:54px;" width="18" height="18" viewBox="0 0 18 18"><rect x="1" y="1" width="11" height="11" fill="#2b9ac8"/><circle cx="12.3" cy="12.2" r="5.8" fill="#2b9ac8" stroke="#4b4b4b" stroke-width="1"/><path d="M6.5,12 A5.8,5.8 0 0 1 12,6.4 V12Z" fill="#a4a4a4" stroke="#3a3a3a" stroke-width="0.8"/></svg><svg style="left:1551px;top:54px;" width="18" height="18" viewBox="0 0 18 18"><rect x="2" y="1" width="10" height="10" fill="#505050"/><circle cx="12" cy="12" r="5.5" fill="#505050"/></svg><div style="position:absolute;left:1668px;top:50px;width:34px;height:26px;background:#4b4b4b;border-radius:2px;"></div><div style="position:absolute;left:1703px;top:50px;width:34px;height:26px;background:#4b4b4b;border-radius:2px;"></div><div style="position:absolute;left:1738px;top:50px;width:34px;height:26px;background:#4b4b4b;border-radius:2px;"></div><svg style="left:1676px;top:54px;" width="19" height="19" viewBox="0 0 19 19"><rect x="5.8" y="5.8" width="11.2" height="11.2" rx="0.8" fill="#2cc8a4" stroke="#4a3c3c" stroke-width="0.6"/><circle cx="6.4" cy="7.2" r="6.5" fill="#a4a4a4" stroke="#4b4b4b" stroke-width="1"/></svg><svg style="left:1711px;top:54px;" width="19" height="19" viewBox="0 0 19 19"><circle cx="7.5" cy="7.4" r="6.5" fill="#a4a4a4"/><rect x="6.6" y="5.6" width="11.4" height="11.4" rx="0.8" fill="#2cc8a4" stroke="#4a3c3c" stroke-width="0.8"/></svg><svg style="left:1746px;top:54px;" width="19" height="19" viewBox="0 0 19 19"><circle cx="8.9" cy="8.9" r="8" fill="#a4a4a4"/><path d="M8.6,8.6 H16.8 A8,8 0 0 1 8.6,16.8Z" fill="#2cc8a4" stroke="#4a3c3c" stroke-width="0.7"/></svg><div style="position:absolute;left:1863px;top:50px;width:34px;height:26px;background:#4b4b4b;border-radius:2px;"></div><svg style="left:1870px;top:53px;" width="20" height="20" viewBox="0 0 20 20"><circle cx="10" cy="7" r="4.5" fill="none" stroke="#3cc87a" stroke-width="1.6"/><path d="M2.5,19 Q3,11.5 10,11.5 Q17,11.5 17.5,19" fill="none" stroke="#3cc87a" stroke-width="1.6"/></svg><div style="position:absolute;left:17px;top:94.84px;font-size:12px;line-height:1;white-space:nowrap;color:#e8e8e8;">4 objet(s)</div><div style="position:absolute;left:76px;top:91px;width:1px;height:20px;background:#2e2e2e;"></div><div style="position:absolute;left:83px;top:91px;width:79px;height:20px;background:#4a4a4a;border-radius:2px;"></div><div style="position:absolute;left:103px;top:95.84px;font-size:12px;line-height:1;white-space:nowrap;color:#e8e8e8;letter-spacing:0.1px;">Grouper</div><div style="position:absolute;left:168px;top:91px;width:1px;height:20px;background:#2e2e2e;"></div><div style="position:absolute;left:176px;top:95px;width:12px;height:12px;background:#2a2a2a;border-radius:2px;"></div><svg style="left:176px;top:95px;" width="12" height="12" viewBox="0 0 12 12"><path d="M3,6.2 L5,8.2 L9.2,3.8" fill="none" stroke="#e0e0e0" stroke-width="1.2"/></svg><div style="position:absolute;left:193px;top:94.84px;font-size:12px;line-height:1;white-space:nowrap;color:#d8d8d8;letter-spacing:-0.5px;">Sélection auto.:</div><div style="position:absolute;left:276px;top:92px;width:77px;height:17px;background:#4a4a4a;border-radius:2px;"></div><div style="position:absolute;left:280px;top:95.34px;font-size:12px;line-height:1;white-space:nowrap;color:#f0f0f0;letter-spacing:-0.3px;">Défaut</div><svg style="left:340px;top:95px;" width="12" height="12" viewBox="0 0 12 12"><path d="M2.5,4.5 L6,8 L9.5,4.5" fill="none" stroke="#e0e0e0" stroke-width="1.1"/></svg><div style="position:absolute;left:360px;top:91px;width:1px;height:20px;background:#2e2e2e;"></div><div style="position:absolute;left:371px;top:91px;width:26px;height:18px;background:#454545;border-radius:2px;"></div><div style="position:absolute;left:398px;top:91px;width:26px;height:18px;background:#454545;border-radius:2px;"></div><div style="position:absolute;left:425px;top:91px;width:26px;height:18px;background:#454545;border-radius:2px;"></div><div style="position:absolute;left:452px;top:91px;width:26px;height:18px;background:#454545;border-radius:2px;"></div><svg style="left:374px;top:92px;" width="20" height="16" viewBox="0 0 20 16"><circle cx="10" cy="8" r="5" fill="none" stroke="#d8d8d8" stroke-width="1.2"/><path d="M10,1V15M3,8H17" stroke="#d8d8d8" stroke-width="1.2"/></svg><svg style="left:401px;top:92px;" width="20" height="16" viewBox="0 0 20 16"><path d="M3,2V14 M17,2V14 M3,2H17 M3,14H17" stroke="#d0d0d0" stroke-width="1.1"/><rect x="1.5" y="0.5" width="3" height="3" fill="#d0d0d0"/><rect x="15.5" y="0.5" width="3" height="3" fill="#d0d0d0"/><rect x="1.5" y="12.5" width="3" height="3" fill="#d0d0d0"/><rect x="15.5" y="12.5" width="3" height="3" fill="#d0d0d0"/><path d="M5.5,8 Q10,3.5 14.5,8 Q10,12.5 5.5,8Z" fill="none" stroke="#d8d8d8" stroke-width="1.1"/><circle cx="10" cy="8" r="1.5" fill="#d8d8d8"/></svg><svg style="left:428px;top:92px;" width="20" height="16" viewBox="0 0 20 16"><path d="M3,2V14 M17,2V14 M3,2H17 M3,14H17" stroke="#d0d0d0" stroke-width="1.1"/><rect x="1.5" y="0.5" width="3" height="3" fill="#d0d0d0"/><rect x="15.5" y="0.5" width="3" height="3" fill="#d0d0d0"/><rect x="1.5" y="12.5" width="3" height="3" fill="#d0d0d0"/><rect x="15.5" y="12.5" width="3" height="3" fill="#d0d0d0"/><path d="M10,3V13" stroke="#d8d8d8" stroke-width="1.4"/><path d="M5,8L8,6V10Z M15,8L12,6V10Z" fill="#d8d8d8"/></svg><svg style="left:455px;top:92px;" width="20" height="16" viewBox="0 0 20 16"><rect x="2" y="1" width="3.5" height="3.5" fill="none" stroke="#c8c8c8" stroke-width="0.9"/><rect x="2" y="6" width="3.5" height="3.5" fill="none" stroke="#c8c8c8" stroke-width="0.9"/><rect x="2" y="11" width="3.5" height="3.5" fill="none" stroke="#c8c8c8" stroke-width="0.9"/><rect x="8" y="1" width="3.5" height="3.5" fill="none" stroke="#c8c8c8" stroke-width="0.9"/><rect x="8" y="6" width="3.5" height="3.5" fill="none" stroke="#c8c8c8" stroke-width="0.9"/><rect x="8" y="11" width="3.5" height="3.5" fill="none" stroke="#c8c8c8" stroke-width="0.9"/><rect x="14" y="1" width="3.5" height="3.5" fill="none" stroke="#c8c8c8" stroke-width="0.9"/><rect x="14" y="6" width="3.5" height="3.5" fill="none" stroke="#c8c8c8" stroke-width="0.9"/><rect x="14" y="11" width="3.5" height="3.5" fill="none" stroke="#c8c8c8" stroke-width="0.9"/><path d="M4,5V14 M4,14H13 M13,5V14 M4,5H13" stroke="#c8c8c8" stroke-width="1" stroke-dasharray="1.5,1"/></svg><div style="position:absolute;left:486px;top:91px;width:160px;height:20px;background:#454545;border-radius:2px;"></div><svg style="left:500px;top:93px;" width="16" height="16" viewBox="0 0 16 16"><path d="M3,2V14 M13,2V14" stroke="#d8d8d8" stroke-width="1.1"/><path d="M3,2H5 M11,2H13 M3,14H5 M11,14H13" stroke="#d8d8d8" stroke-width="1"/><circle cx="3" cy="2" r="1.3" fill="#d8d8d8"/><circle cx="13" cy="2" r="1.3" fill="#d8d8d8"/><circle cx="3" cy="14" r="1.3" fill="#d8d8d8"/><circle cx="13" cy="14" r="1.3" fill="#d8d8d8"/><path d="M7,5.5 L10,8 L7,10.5Z" fill="#d8d8d8"/></svg><div style="position:absolute;left:521px;top:95.84px;font-size:12px;line-height:1;white-space:nowrap;color:#f0f0f0;letter-spacing:-0.05px;">Convertir en courbes</div><div style="position:absolute;left:652px;top:91px;width:1px;height:20px;background:#2e2e2e;"></div><div style="position:absolute;left:663px;top:91px;width:26px;height:18px;background:#454545;border-radius:2px;"></div><div style="position:absolute;left:690px;top:91px;width:26px;height:18px;background:#454545;border-radius:2px;"></div><div style="position:absolute;left:717px;top:91px;width:26px;height:18px;background:#454545;border-radius:2px;"></div><div style="position:absolute;left:755px;top:91px;width:26px;height:18px;background:#454545;border-radius:2px;"></div><div style="position:absolute;left:782px;top:91px;width:26px;height:18px;background:#454545;border-radius:2px;"></div><div style="position:absolute;left:809px;top:91px;width:26px;height:18px;background:#454545;border-radius:2px;"></div><svg style="left:666px;top:92px;" width="20" height="16" viewBox="0 0 20 16"><rect x="5" y="2" width="1" height="12" fill="#30a0d0"/><rect x="7" y="4" width="6" height="3" fill="#b0b0b0"/><rect x="7" y="9" width="9" height="3" fill="#b0b0b0"/></svg><svg style="left:693px;top:92px;" width="20" height="16" viewBox="0 0 20 16"><rect x="9.5" y="2" width="1" height="12" fill="#30a0d0"/><rect x="7" y="4" width="6" height="3" fill="#b0b0b0"/><rect x="5" y="9" width="10" height="3" fill="#b0b0b0"/></svg><svg style="left:720px;top:92px;" width="20" height="16" viewBox="0 0 20 16"><rect x="15" y="2" width="1" height="12" fill="#30a0d0"/><rect x="8" y="4" width="6" height="3" fill="#b0b0b0"/><rect x="5" y="9" width="9" height="3" fill="#b0b0b0"/></svg><svg style="left:758px;top:92px;" width="20" height="16" viewBox="0 0 20 16"><rect x="4" y="2.5" width="12" height="1" fill="#30a0d0"/><rect x="6" y="4.5" width="3" height="6" fill="#b0b0b0"/><rect x="11" y="4.5" width="3" height="9" fill="#b0b0b0"/></svg><svg style="left:785px;top:92px;" width="20" height="16" viewBox="0 0 20 16"><rect x="3" y="7.5" width="14" height="1" fill="#30a0d0"/><rect x="6" y="4" width="3" height="8" fill="#b0b0b0"/><rect x="11" y="5" width="3" height="6" fill="#b0b0b0"/></svg><svg style="left:812px;top:92px;" width="20" height="16" viewBox="0 0 20 16"><rect x="4" y="13.5" width="12" height="1" fill="#30a0d0"/><rect x="6" y="7" width="3" height="6" fill="#b0b0b0"/><rect x="11" y="3" width="3" height="10" fill="#b0b0b0"/></svg><div style="position:absolute;left:64px;top:124.69px;font-size:11px;line-height:1;white-space:nowrap;color:#f0f0f0;">zentangle paradox [Modifié] (79.3%)</div><svg style="left:838px;top:124px;" width="11" height="11" viewBox="0 0 11 11"><path d="M2,2 L9,9 M9,2 L2,9" stroke="#ececec" stroke-width="1.4"/></svg><div style="position:absolute;left:865px;top:124.69px;font-size:11px;line-height:1;white-space:nowrap;color:#f0f0f0;">zentangle paradox triangle [Modifié] (68.4%)</div><svg style="left:1638px;top:124px;" width="11" height="11" viewBox="0 0 11 11"><path d="M2,2 L9,9 M9,2 L2,9" stroke="#ececec" stroke-width="1.4"/></svg><svg style="left:0;top:0" width="1928" height="1096"><g fill="#dedede"><rect x="81.36" y="161" width="1" height="2"/><rect x="88.24" y="159" width="1" height="4"/><rect x="95.12" y="161" width="1" height="2"/><rect x="102.00" y="155" width="1" height="8"/><rect x="108.88" y="161" width="1" height="2"/><rect x="115.76" y="159" width="1" height="4"/><rect x="122.64" y="161" width="1" height="2"/><rect x="129.52" y="159" width="1" height="4"/><rect x="136.40" y="161" width="1" height="2"/><rect x="143.28" y="159" width="1" height="4"/><rect x="150.16" y="161" width="1" height="2"/><rect x="157.04" y="159" width="1" height="4"/><rect x="163.92" y="161" width="1" height="2"/><rect x="170.80" y="155" width="1" height="8"/><rect x="177.68" y="161" width="1" height="2"/><rect x="184.56" y="159" width="1" height="4"/><rect x="191.44" y="161" width="1" height="2"/><rect x="198.32" y="159" width="1" height="4"/><rect x="205.20" y="161" width="1" height="2"/><rect x="212.08" y="159" width="1" height="4"/><rect x="218.96" y="161" width="1" height="2"/><rect x="225.84" y="159" width="1" height="4"/><rect x="232.72" y="161" width="1" height="2"/><rect x="239.60" y="155" width="1" height="8"/><rect x="246.48" y="161" width="1" height="2"/><rect x="253.36" y="159" width="1" height="4"/><rect x="260.24" y="161" width="1" height="2"/><rect x="267.12" y="159" width="1" height="4"/><rect x="274.00" y="161" width="1" height="2"/><rect x="280.88" y="159" width="1" height="4"/><rect x="287.76" y="161" width="1" height="2"/><rect x="294.64" y="159" width="1" height="4"/><rect x="301.52" y="161" width="1" height="2"/><rect x="308.40" y="155" width="1" height="8"/><rect x="315.28" y="161" width="1" height="2"/><rect x="322.16" y="159" width="1" height="4"/><rect x="329.04" y="161" width="1" height="2"/><rect x="335.92" y="159" width="1" height="4"/><rect x="342.80" y="161" width="1" height="2"/><rect x="349.68" y="159" width="1" height="4"/><rect x="356.56" y="161" width="1" height="2"/><rect x="363.44" y="159" width="1" height="4"/><rect x="370.32" y="161" width="1" height="2"/><rect x="377.20" y="155" width="1" height="8"/><rect x="384.08" y="161" width="1" height="2"/><rect x="390.96" y="159" width="1" height="4"/><rect x="397.84" y="161" width="1" height="2"/><rect x="404.72" y="159" width="1" height="4"/><rect x="411.60" y="161" width="1" height="2"/><rect x="418.48" y="159" width="1" height="4"/><rect x="425.36" y="161" width="1" height="2"/><rect x="432.24" y="159" width="1" height="4"/><rect x="439.12" y="161" width="1" height="2"/><rect x="446.00" y="155" width="1" height="8"/><rect x="452.88" y="161" width="1" height="2"/><rect x="459.76" y="159" width="1" height="4"/><rect x="466.64" y="161" width="1" height="2"/><rect x="473.52" y="159" width="1" height="4"/><rect x="480.40" y="161" width="1" height="2"/><rect x="487.28" y="159" width="1" height="4"/><rect x="494.16" y="161" width="1" height="2"/><rect x="501.04" y="159" width="1" height="4"/><rect x="507.92" y="161" width="1" height="2"/><rect x="514.80" y="155" width="1" height="8"/><rect x="521.68" y="161" width="1" height="2"/><rect x="528.56" y="159" width="1" height="4"/><rect x="535.44" y="161" width="1" height="2"/><rect x="542.32" y="159" width="1" height="4"/><rect x="549.20" y="161" width="1" height="2"/><rect x="556.08" y="159" width="1" height="4"/><rect x="562.96" y="161" width="1" height="2"/><rect x="569.84" y="159" width="1" height="4"/><rect x="576.72" y="161" width="1" height="2"/><rect x="583.60" y="155" width="1" height="8"/><rect x="590.48" y="161" width="1" height="2"/><rect x="597.36" y="159" width="1" height="4"/><rect x="604.24" y="161" width="1" height="2"/><rect x="611.12" y="159" width="1" height="4"/><rect x="618.00" y="161" width="1" height="2"/><rect x="624.88" y="159" width="1" height="4"/><rect x="631.76" y="161" width="1" height="2"/><rect x="638.64" y="159" width="1" height="4"/><rect x="645.52" y="161" width="1" height="2"/><rect x="652.40" y="155" width="1" height="8"/><rect x="659.28" y="161" width="1" height="2"/><rect x="666.16" y="159" width="1" height="4"/><rect x="673.04" y="161" width="1" height="2"/><rect x="679.92" y="159" width="1" height="4"/><rect x="686.80" y="161" width="1" height="2"/><rect x="693.68" y="159" width="1" height="4"/><rect x="700.56" y="161" width="1" height="2"/><rect x="707.44" y="159" width="1" height="4"/><rect x="714.32" y="161" width="1" height="2"/><rect x="721.20" y="155" width="1" height="8"/><rect x="728.08" y="161" width="1" height="2"/><rect x="734.96" y="159" width="1" height="4"/><rect x="741.84" y="161" width="1" height="2"/><rect x="748.72" y="159" width="1" height="4"/><rect x="755.60" y="161" width="1" height="2"/><rect x="762.48" y="159" width="1" height="4"/><rect x="769.36" y="161" width="1" height="2"/><rect x="776.24" y="159" width="1" height="4"/><rect x="783.12" y="161" width="1" height="2"/><rect x="790.00" y="155" width="1" height="8"/><rect x="796.88" y="161" width="1" height="2"/><rect x="803.76" y="159" width="1" height="4"/><rect x="810.64" y="161" width="1" height="2"/><rect x="817.52" y="159" width="1" height="4"/><rect x="824.40" y="161" width="1" height="2"/><rect x="831.28" y="159" width="1" height="4"/><rect x="838.16" y="161" width="1" height="2"/><rect x="845.04" y="159" width="1" height="4"/><rect x="851.92" y="161" width="1" height="2"/><rect x="858.80" y="155" width="1" height="8"/><rect x="865.68" y="161" width="1" height="2"/><rect x="872.56" y="159" width="1" height="4"/><rect x="879.44" y="161" width="1" height="2"/><rect x="886.32" y="159" width="1" height="4"/><rect x="893.20" y="161" width="1" height="2"/><rect x="900.08" y="159" width="1" height="4"/><rect x="906.96" y="161" width="1" height="2"/><rect x="913.84" y="159" width="1" height="4"/><rect x="920.72" y="161" width="1" height="2"/><rect x="927.60" y="155" width="1" height="8"/><rect x="934.48" y="161" width="1" height="2"/><rect x="941.36" y="159" width="1" height="4"/><rect x="948.24" y="161" width="1" height="2"/><rect x="955.12" y="159" width="1" height="4"/><rect x="962.00" y="161" width="1" height="2"/><rect x="968.88" y="159" width="1" height="4"/><rect x="975.76" y="161" width="1" height="2"/><rect x="982.64" y="159" width="1" height="4"/><rect x="989.52" y="161" width="1" height="2"/><rect x="996.40" y="155" width="1" height="8"/><rect x="1003.28" y="161" width="1" height="2"/><rect x="1010.16" y="159" width="1" height="4"/><rect x="1017.04" y="161" width="1" height="2"/><rect x="1023.92" y="159" width="1" height="4"/><rect x="1030.80" y="161" width="1" height="2"/><rect x="1037.68" y="159" width="1" height="4"/><rect x="1044.56" y="161" width="1" height="2"/><rect x="1051.44" y="159" width="1" height="4"/><rect x="1058.32" y="161" width="1" height="2"/><rect x="1065.20" y="155" width="1" height="8"/><rect x="1072.08" y="161" width="1" height="2"/><rect x="1078.96" y="159" width="1" height="4"/><rect x="1085.84" y="161" width="1" height="2"/><rect x="1092.72" y="159" width="1" height="4"/><rect x="1099.60" y="161" width="1" height="2"/><rect x="1106.48" y="159" width="1" height="4"/><rect x="1113.36" y="161" width="1" height="2"/><rect x="1120.24" y="159" width="1" height="4"/><rect x="1127.12" y="161" width="1" height="2"/><rect x="1134.00" y="155" width="1" height="8"/><rect x="1140.88" y="161" width="1" height="2"/><rect x="1147.76" y="159" width="1" height="4"/><rect x="1154.64" y="161" width="1" height="2"/><rect x="1161.52" y="159" width="1" height="4"/><rect x="1168.40" y="161" width="1" height="2"/><rect x="1175.28" y="159" width="1" height="4"/><rect x="1182.16" y="161" width="1" height="2"/><rect x="1189.04" y="159" width="1" height="4"/><rect x="1195.92" y="161" width="1" height="2"/><rect x="1202.80" y="155" width="1" height="8"/><rect x="1209.68" y="161" width="1" height="2"/><rect x="1216.56" y="159" width="1" height="4"/><rect x="1223.44" y="161" width="1" height="2"/><rect x="1230.32" y="159" width="1" height="4"/><rect x="1237.20" y="161" width="1" height="2"/><rect x="1244.08" y="159" width="1" height="4"/><rect x="1250.96" y="161" width="1" height="2"/><rect x="1257.84" y="159" width="1" height="4"/><rect x="1264.72" y="161" width="1" height="2"/><rect x="1271.60" y="155" width="1" height="8"/><rect x="1278.48" y="161" width="1" height="2"/><rect x="1285.36" y="159" width="1" height="4"/><rect x="1292.24" y="161" width="1" height="2"/><rect x="1299.12" y="159" width="1" height="4"/><rect x="1306.00" y="161" width="1" height="2"/><rect x="1312.88" y="159" width="1" height="4"/><rect x="1319.76" y="161" width="1" height="2"/><rect x="1326.64" y="159" width="1" height="4"/><rect x="1333.52" y="161" width="1" height="2"/><rect x="1340.40" y="155" width="1" height="8"/><rect x="1347.28" y="161" width="1" height="2"/><rect x="1354.16" y="159" width="1" height="4"/><rect x="1361.04" y="161" width="1" height="2"/><rect x="1367.92" y="159" width="1" height="4"/><rect x="1374.80" y="161" width="1" height="2"/><rect x="1381.68" y="159" width="1" height="4"/><rect x="1388.56" y="161" width="1" height="2"/><rect x="1395.44" y="159" width="1" height="4"/><rect x="1402.32" y="161" width="1" height="2"/><rect x="1409.20" y="155" width="1" height="8"/><rect x="1416.08" y="161" width="1" height="2"/><rect x="1422.96" y="159" width="1" height="4"/><rect x="1429.84" y="161" width="1" height="2"/><rect x="1436.72" y="159" width="1" height="4"/><rect x="1443.60" y="161" width="1" height="2"/><rect x="1450.48" y="159" width="1" height="4"/><rect x="1457.36" y="161" width="1" height="2"/><rect x="1464.24" y="159" width="1" height="4"/><rect x="1471.12" y="161" width="1" height="2"/><rect x="1478.00" y="155" width="1" height="8"/><rect x="1484.88" y="161" width="1" height="2"/><rect x="1491.76" y="159" width="1" height="4"/><rect x="1498.64" y="161" width="1" height="2"/><rect x="1505.52" y="159" width="1" height="4"/><rect x="1512.40" y="161" width="1" height="2"/><rect x="1519.28" y="159" width="1" height="4"/><rect x="1526.16" y="161" width="1" height="2"/><rect x="1533.04" y="159" width="1" height="4"/><rect x="1539.92" y="161" width="1" height="2"/><rect x="1546.80" y="155" width="1" height="8"/><rect x="1553.68" y="161" width="1" height="2"/><rect x="1560.56" y="159" width="1" height="4"/><rect x="1567.44" y="161" width="1" height="2"/><rect x="1574.32" y="159" width="1" height="4"/><rect x="1581.20" y="161" width="1" height="2"/><rect x="1588.08" y="159" width="1" height="4"/><rect x="1594.96" y="161" width="1" height="2"/><rect x="1601.84" y="159" width="1" height="4"/><rect x="1608.72" y="161" width="1" height="2"/><rect x="1615.60" y="155" width="1" height="8"/><rect x="1622.48" y="161" width="1" height="2"/><rect x="1629.36" y="159" width="1" height="4"/><rect x="1636.24" y="161" width="1" height="2"/><rect x="71" y="165.42" width="5" height="1"/><rect x="73" y="172.30" width="3" height="1"/><rect x="67" y="179.17" width="9" height="1"/><rect x="73" y="186.04" width="3" height="1"/><rect x="71" y="192.92" width="5" height="1"/><rect x="73" y="199.79" width="3" height="1"/><rect x="71" y="206.66" width="5" height="1"/><rect x="73" y="213.53" width="3" height="1"/><rect x="71" y="220.41" width="5" height="1"/><rect x="73" y="227.28" width="3" height="1"/><rect x="71" y="234.15" width="5" height="1"/><rect x="73" y="241.03" width="3" height="1"/><rect x="67" y="247.90" width="9" height="1"/><rect x="73" y="254.77" width="3" height="1"/><rect x="71" y="261.65" width="5" height="1"/><rect x="73" y="268.52" width="3" height="1"/><rect x="71" y="275.39" width="5" height="1"/><rect x="73" y="282.26" width="3" height="1"/><rect x="71" y="289.14" width="5" height="1"/><rect x="73" y="296.01" width="3" height="1"/><rect x="71" y="302.88" width="5" height="1"/><rect x="73" y="309.76" width="3" height="1"/><rect x="67" y="316.63" width="9" height="1"/><rect x="73" y="323.50" width="3" height="1"/><rect x="71" y="330.38" width="5" height="1"/><rect x="73" y="337.25" width="3" height="1"/><rect x="71" y="344.12" width="5" height="1"/><rect x="73" y="351.00" width="3" height="1"/><rect x="71" y="357.87" width="5" height="1"/><rect x="73" y="364.74" width="3" height="1"/><rect x="71" y="371.61" width="5" height="1"/><rect x="73" y="378.49" width="3" height="1"/><rect x="67" y="385.36" width="9" height="1"/><rect x="73" y="392.23" width="3" height="1"/><rect x="71" y="399.11" width="5" height="1"/><rect x="73" y="405.98" width="3" height="1"/><rect x="71" y="412.85" width="5" height="1"/><rect x="73" y="419.73" width="3" height="1"/><rect x="71" y="426.60" width="5" height="1"/><rect x="73" y="433.47" width="3" height="1"/><rect x="71" y="440.34" width="5" height="1"/><rect x="73" y="447.22" width="3" height="1"/><rect x="67" y="454.09" width="9" height="1"/><rect x="73" y="460.96" width="3" height="1"/><rect x="71" y="467.84" width="5" height="1"/><rect x="73" y="474.71" width="3" height="1"/><rect x="71" y="481.58" width="5" height="1"/><rect x="73" y="488.46" width="3" height="1"/><rect x="71" y="495.33" width="5" height="1"/><rect x="73" y="502.20" width="3" height="1"/><rect x="71" y="509.07" width="5" height="1"/><rect x="73" y="515.95" width="3" height="1"/><rect x="67" y="522.82" width="9" height="1"/><rect x="73" y="529.69" width="3" height="1"/><rect x="71" y="536.57" width="5" height="1"/><rect x="73" y="543.44" width="3" height="1"/><rect x="71" y="550.31" width="5" height="1"/><rect x="73" y="557.19" width="3" height="1"/><rect x="71" y="564.06" width="5" height="1"/><rect x="73" y="570.93" width="3" height="1"/><rect x="71" y="577.80" width="5" height="1"/><rect x="73" y="584.68" width="3" height="1"/><rect x="67" y="591.55" width="9" height="1"/><rect x="73" y="598.42" width="3" height="1"/><rect x="71" y="605.30" width="5" height="1"/><rect x="73" y="612.17" width="3" height="1"/><rect x="71" y="619.04" width="5" height="1"/><rect x="73" y="625.91" width="3" height="1"/><rect x="71" y="632.79" width="5" height="1"/><rect x="73" y="639.66" width="3" height="1"/><rect x="71" y="646.53" width="5" height="1"/><rect x="73" y="653.41" width="3" height="1"/><rect x="67" y="660.28" width="9" height="1"/><rect x="73" y="667.15" width="3" height="1"/><rect x="71" y="674.03" width="5" height="1"/><rect x="73" y="680.90" width="3" height="1"/><rect x="71" y="687.77" width="5" height="1"/><rect x="73" y="694.64" width="3" height="1"/><rect x="71" y="701.52" width="5" height="1"/><rect x="73" y="708.39" width="3" height="1"/><rect x="71" y="715.26" width="5" height="1"/><rect x="73" y="722.14" width="3" height="1"/><rect x="67" y="729.01" width="9" height="1"/><rect x="73" y="735.88" width="3" height="1"/><rect x="71" y="742.76" width="5" height="1"/><rect x="73" y="749.63" width="3" height="1"/><rect x="71" y="756.50" width="5" height="1"/><rect x="73" y="763.38" width="3" height="1"/><rect x="71" y="770.25" width="5" height="1"/><rect x="73" y="777.12" width="3" height="1"/><rect x="71" y="783.99" width="5" height="1"/><rect x="73" y="790.87" width="3" height="1"/><rect x="67" y="797.74" width="9" height="1"/><rect x="73" y="804.61" width="3" height="1"/><rect x="71" y="811.49" width="5" height="1"/><rect x="73" y="818.36" width="3" height="1"/><rect x="71" y="825.23" width="5" height="1"/><rect x="73" y="832.11" width="3" height="1"/><rect x="71" y="838.98" width="5" height="1"/><rect x="73" y="845.85" width="3" height="1"/><rect x="71" y="852.72" width="5" height="1"/><rect x="73" y="859.60" width="3" height="1"/><rect x="67" y="866.47" width="9" height="1"/><rect x="73" y="873.34" width="3" height="1"/><rect x="71" y="880.22" width="5" height="1"/><rect x="73" y="887.09" width="3" height="1"/><rect x="71" y="893.96" width="5" height="1"/><rect x="73" y="900.84" width="3" height="1"/><rect x="71" y="907.71" width="5" height="1"/><rect x="73" y="914.58" width="3" height="1"/><rect x="71" y="921.45" width="5" height="1"/><rect x="73" y="928.33" width="3" height="1"/><rect x="67" y="935.20" width="9" height="1"/><rect x="73" y="942.07" width="3" height="1"/><rect x="71" y="948.95" width="5" height="1"/><rect x="73" y="955.82" width="3" height="1"/><rect x="71" y="962.69" width="5" height="1"/><rect x="73" y="969.57" width="3" height="1"/><rect x="71" y="976.44" width="5" height="1"/><rect x="73" y="983.31" width="3" height="1"/><rect x="71" y="990.18" width="5" height="1"/><rect x="73" y="997.06" width="3" height="1"/><rect x="67" y="1003.93" width="9" height="1"/><rect x="73" y="1010.80" width="3" height="1"/><rect x="71" y="1017.68" width="5" height="1"/><rect x="73" y="1024.55" width="3" height="1"/><rect x="71" y="1031.42" width="5" height="1"/><rect x="73" y="1038.30" width="3" height="1"/></g><g fill="#d8d8d8" font-family="Liberation Sans" font-size="8.5"><text x="102.50" y="151.8" text-anchor="middle">-120</text><text x="171.30" y="151.8" text-anchor="middle">-100</text><text x="240.10" y="151.8" text-anchor="middle">-80</text><text x="308.90" y="151.8" text-anchor="middle">-60</text><text x="377.70" y="151.8" text-anchor="middle">-40</text><text x="446.50" y="151.8" text-anchor="middle">-20</text><text x="515.30" y="151.8" text-anchor="middle">0</text><text x="584.10" y="151.8" text-anchor="middle">20</text><text x="652.90" y="151.8" text-anchor="middle">40</text><text x="721.70" y="151.8" text-anchor="middle">60</text><text x="790.50" y="151.8" text-anchor="middle">80</text><text x="859.30" y="151.8" text-anchor="middle">100</text><text x="928.10" y="151.8" text-anchor="middle">120</text><text x="996.90" y="151.8" text-anchor="middle">140</text><text x="1065.70" y="151.8" text-anchor="middle">160</text><text x="1134.50" y="151.8" text-anchor="middle">180</text><text x="1203.30" y="151.8" text-anchor="middle">200</text><text x="1272.10" y="151.8" text-anchor="middle">220</text><text x="1340.90" y="151.8" text-anchor="middle">240</text><text x="1409.70" y="151.8" text-anchor="middle">260</text><text x="1478.50" y="151.8" text-anchor="middle">280</text><text x="1547.30" y="151.8" text-anchor="middle">300</text><text x="1616.10" y="151.8" text-anchor="middle">320</text><text x="0" y="0" transform="translate(64.3,179.67) rotate(-90)" text-anchor="middle">-20</text><text x="0" y="0" transform="translate(64.3,248.40) rotate(-90)" text-anchor="middle">0</text><text x="0" y="0" transform="translate(64.3,317.13) rotate(-90)" text-anchor="middle">20</text><text x="0" y="0" transform="translate(64.3,385.86) rotate(-90)" text-anchor="middle">40</text><text x="0" y="0" transform="translate(64.3,454.59) rotate(-90)" text-anchor="middle">60</text><text x="0" y="0" transform="translate(64.3,523.32) rotate(-90)" text-anchor="middle">80</text><text x="0" y="0" transform="translate(64.3,592.05) rotate(-90)" text-anchor="middle">100</text><text x="0" y="0" transform="translate(64.3,660.78) rotate(-90)" text-anchor="middle">120</text><text x="0" y="0" transform="translate(64.3,729.51) rotate(-90)" text-anchor="middle">140</text><text x="0" y="0" transform="translate(64.3,798.24) rotate(-90)" text-anchor="middle">160</text><text x="0" y="0" transform="translate(64.3,866.97) rotate(-90)" text-anchor="middle">180</text><text x="0" y="0" transform="translate(64.3,935.70) rotate(-90)" text-anchor="middle">200</text><text x="0" y="0" transform="translate(64.3,1004.43) rotate(-90)" text-anchor="middle">220</text><text x="58" y="155">mm</text></g><rect x="1640" y="148" width="18" height="15" fill="#474747"/><rect x="54" y="143" width="1" height="919" fill="#2c2c2c"/><rect x="1639" y="143" width="1.5" height="6" fill="#2f8fe8"/><rect x="55" y="633" width="20" height="1.5" fill="#2f8fe8"/></svg><svg style="left:0;top:0" width="1928" height="1096"><path d="M886.5,256 V278.5" stroke="#a8ccf5" stroke-width="1.2"/><g stroke="#2a72d0" stroke-width="1.3" fill="none"><path d="M549.5,282.4 V956.4"/><path d="M886.5,282.4 V956.4"/><path d="M1223.5,282.4 V956.4"/><path d="M549.5,282.4 H1223.5"/><path d="M549.5,619.4 H1223.5"/><path d="M549.5,956.4 H1223.5"/></g><g fill="#ffffff" stroke="#8fbef5" stroke-width="1.6"><circle cx="549.5" cy="282.4" r="3.8"/><circle cx="886.5" cy="282.4" r="3.8"/><circle cx="1223.5" cy="282.4" r="3.8"/><circle cx="549.5" cy="619.4" r="3.8"/><circle cx="1223.5" cy="619.4" r="3.8"/><circle cx="549.5" cy="956.4" r="3.8"/><circle cx="886.5" cy="956.4" r="3.8"/><circle cx="1223.5" cy="956.4" r="3.8"/><circle cx="886.5" cy="252.3" r="3.8"/></g></svg><svg style="left:60px;top:1047px;" width="12" height="12" viewBox="0 0 12 12"><path d="M10,2 V10 L3,6Z" fill="#8a8a8a"/></svg><div style="position:absolute;left:560px;top:1049px;width:522px;height:8px;background:#8c8c8c;border-radius:4px;"></div><svg style="left:1625px;top:1047px;" width="12" height="12" viewBox="0 0 12 12"><path d="M2,2 V10 L9,6Z" fill="#8a8a8a"/></svg><div style="position:absolute;left:1646px;top:450px;width:7px;height:260px;background:#8c8c8c;border-radius:4px;"></div><svg style="left:1643px;top:1029px;" width="12" height="12" viewBox="0 0 12 12"><path d="M2,2 H10 L6,9Z" fill="#8a8a8a"/></svg><div style="position:absolute;left:30px;top:1068px;font-size:12px;line-height:16px;white-space:nowrap;color:#dcdcdc;letter-spacing:-0.085px;">4 objet(s) sélectionné(s). <b style="color:#fff">Glisser</b> pour déplacer la sélection. <b style="color:#fff">Cliquer</b> sur un autre objet pour le sélectionner. <b style="color:#fff">Cliquer</b> sur une zone vide pour annuler la sélection. <b style="color:#fff">Renvoyer</b> pour saisir/dupliquer des valeurs.</div><div style="position:absolute;left:0px;top:1017px;width:5px;height:79px;background:#a8a8a8;border-radius:3px 0 0 0;"></div><div style="position:absolute;left:16px;top:118px;width:30px;height:30px;background:#2e2e2e;border-radius:3px;"></div><svg style="left:21px;top:123px;" width="22" height="20" viewBox="0 0 22 20"><path d="M7,2 L7,17 L10.5,13.5 L13,19 L15,18 L12.5,12.5 L17,12.5Z" fill="#202020" stroke="#e8e8e8" stroke-width="1.2"/></svg><svg style="left:21px;top:154px;" width="22" height="20" viewBox="0 0 22 20"><rect x="6" y="5" width="11" height="11" fill="#1e5a64" stroke="#e0e0e0" stroke-width="1" stroke-dasharray="2,1"/><path d="M4,1V6 M1.5,3.5H6.5" stroke="#30d0a0" stroke-width="1.3"/></svg><svg style="left:21px;top:185px;" width="22" height="20" viewBox="0 0 22 20"><path d="M7,2 L17,9 L11.5,10 L8,14Z" fill="#d8d8d8"/></svg><svg style="left:37px;top:199px;" width="6" height="6" viewBox="0 0 6 6"><path d="M6,0 V6 H0Z" fill="#e8e8e8"/></svg><svg style="left:21px;top:216px;" width="22" height="20" viewBox="0 0 22 20"><circle cx="10" cy="11" r="7" fill="#5a6adc" stroke="#e0e0e0" stroke-width="0.9" stroke-dasharray="1.5,1"/><circle cx="10" cy="11" r="3" fill="none" stroke="#e0e0e0" stroke-width="1.3"/><path d="M14,4 L19,2 L18,7Z" fill="#e0e0e0"/></svg><svg style="left:21px;top:247px;" width="22" height="20" viewBox="0 0 22 20"><path d="M3,3 H15 L3,15Z" fill="#9a9a9a"/><path d="M4,19 A15,15 0 0 1 19,4" fill="none" stroke="#c82840" stroke-width="3"/><path d="M3,3V19 M3,3H19" stroke="#d0d0d0" stroke-width="1"/></svg><svg style="left:21px;top:278px;" width="22" height="20" viewBox="0 0 22 20"><path d="M3,18 L6,10 L12,6 L15,9 L11,15Z" fill="#d0d0d0"/><path d="M3,18 L9,12" stroke="#303030" stroke-width="1"/><rect x="12" y="2" width="6" height="5" fill="#f05a48" transform="rotate(45 15 4.5)"/></svg><svg style="left:21px;top:309px;" width="22" height="20" viewBox="0 0 22 20"><path d="M12,10 L18,2.5 Q20,1 19.5,3.5 L14,11.5Z" fill="#2a9ae0"/><path d="M7,11 Q10,9.5 12.5,11.5 Q12,14 9,14.5 Q7,15 4.5,15 Q6.5,13.5 7,11Z" fill="#c8906a"/><path d="M5,18 Q8,14 11,16.5 Q13,18 15,14" fill="none" stroke="#d8d8d8" stroke-width="0.9"/><path d="M15,9V18 M13.5,13.5H16.5" stroke="#d8d8d8" stroke-width="0.9"/><circle cx="15" cy="13.5" r="1.2" fill="#d8d8d8"/></svg><svg style="left:37px;top:323px;" width="6" height="6" viewBox="0 0 6 6"><path d="M6,0 V6 H0Z" fill="#e8e8e8"/></svg><svg style="left:21px;top:340px;" width="22" height="20" viewBox="0 0 22 20"><path d="M11,9.5 L17,3 Q19,1.5 20,3.5 Q20.5,5 19,6 L13,11.5Z" fill="#b86e4a"/><circle cx="17.8" cy="4.2" r="1" fill="#e8d8c8"/><path d="M2,19 L10,8.5 L13.5,12Z" fill="#a8a8a8"/><path d="M2,19 L13.5,12" stroke="#d8d8d8" stroke-width="0.8"/></svg><svg style="left:21px;top:371px;" width="22" height="20" viewBox="0 0 22 20"><g transform="rotate(-45 11 10)"><rect x="3" y="4.5" width="16" height="5.5" fill="#e0c890"/><rect x="3" y="10" width="16" height="5.5" fill="#5ab0e0"/><rect x="3" y="4.5" width="8" height="11" fill="#ffffff" opacity="0.25"/></g><path d="M4,16.5 L17.5,3" stroke="#e8e8e8" stroke-width="1"/><circle cx="3.8" cy="16.8" r="1.8" fill="#3a3a3a" stroke="#e8e8e8" stroke-width="1"/><circle cx="17.5" cy="2.8" r="1.8" fill="#3a3a3a" stroke="#e8e8e8" stroke-width="1"/></svg><svg style="left:21px;top:402px;" width="22" height="20" viewBox="0 0 22 20"><path d="M6,1 Q5,9 11,11 Q17,9 16,1" fill="none" stroke="#e0e0e0" stroke-width="1.1"/><path d="M6.6,4 H15.4 Q15.5,9.5 11,10.5 Q6.5,9.5 6.6,4Z" fill="#3a88c8"/><path d="M11,11V18 M7,18.5H15" stroke="#e0e0e0" stroke-width="1.1"/></svg><svg style="left:21px;top:433px;" width="22" height="20" viewBox="0 0 22 20"><rect x="2" y="2" width="18" height="15" fill="#4a90c0" stroke="#6ab0e0" stroke-width="1"/><path d="M2.5,12 Q8,8 12,11 Q16,9 19.5,11 V16.5 H2.5Z" fill="#1a4a68"/><path d="M5,7 Q6,5 8,6 Q9.5,5 10.5,7Z" fill="#e8f0f8"/><circle cx="15.5" cy="5.5" r="1.6" fill="#e8f0f8"/></svg><svg style="left:21px;top:464px;" width="22" height="20" viewBox="0 0 22 20"><path d="M9,6 L15,3 L19,8 L13,15 L8,11Z" fill="#a8a8a8"/><path d="M13,15 L19,8 L17,13Z" fill="#707070"/><ellipse cx="14" cy="6" rx="5" ry="2" fill="none" stroke="#d0d0d0" stroke-width="0.9" transform="rotate(-20 14 6)"/><path d="M4,15 L4,8 L8,3" fill="none" stroke="#40a0e8" stroke-width="1.3" stroke-dasharray="1.5,1"/><circle cx="4" cy="16" r="1.4" fill="none" stroke="#e0e0e0"/><circle cx="4" cy="7.5" r="1.4" fill="#e0e0e0"/><circle cx="8.5" cy="2.5" r="1.4" fill="#e0e0e0"/></svg><svg style="left:21px;top:495px;" width="22" height="20" viewBox="0 0 22 20"><path d="M6,2V15H19 M2,6H15V19 M4,17 L17,4" fill="none" stroke="#e0e0e0" stroke-width="1.5"/></svg><svg style="left:21px;top:526px;" width="22" height="20" viewBox="0 0 22 20"><rect x="3.5" y="2.5" width="14" height="14" rx="1" fill="#242a2c" stroke="#c0c0c0" stroke-width="1.3"/></svg><svg style="left:21px;top:557px;" width="22" height="20" viewBox="0 0 22 20"><circle cx="10.5" cy="10" r="7.3" fill="#242a2c" stroke="#c8c8c8" stroke-width="1.3"/></svg><svg style="left:21px;top:588px;" width="22" height="20" viewBox="0 0 22 20"><path d="M10.5,2.5 L17.5,16.5 H3.5Z" fill="#242a2c" stroke="#c8c8c8" stroke-width="1.3" stroke-linejoin="round"/></svg><svg style="left:37px;top:602px;" width="6" height="6" viewBox="0 0 6 6"><path d="M6,0 V6 H0Z" fill="#e8e8e8"/></svg><svg style="left:21px;top:619px;" width="22" height="20" viewBox="0 0 22 20"><rect x="6" y="7" width="11" height="11" fill="#1e5a64" stroke="#d0d0d0" stroke-dasharray="1.5,1"/><circle cx="9" cy="9" r="6" fill="#1e5a64" stroke="#40c0d0" stroke-dasharray="1.5,1"/><path d="M8,8 H16 V16 A8,8 0 0 1 8,8Z" fill="#40e080"/></svg><svg style="left:21px;top:650px;" width="22" height="20" viewBox="0 0 22 20"><rect x="3" y="2" width="15" height="15" fill="none" stroke="#4a8ad0" stroke-width="1.1"/><circle cx="3" cy="2" r="1.4" fill="#4a8ad0"/><circle cx="18" cy="2" r="1.4" fill="#4a8ad0"/><circle cx="3" cy="17" r="1.4" fill="#4a8ad0"/><path d="M6.5,14 L10.5,4.5 L14.5,14 M8,11H13" fill="none" stroke="#d8d8d8" stroke-width="1.3"/></svg><svg style="left:37px;top:664px;" width="6" height="6" viewBox="0 0 6 6"><path d="M6,0 V6 H0Z" fill="#e8e8e8"/></svg><svg style="left:21px;top:681px;" width="22" height="20" viewBox="0 0 22 20"><circle cx="15" cy="5" r="3.5" fill="#c87848"/><path d="M3,18 L13,7 L14,8 L4,19Z" fill="#d0d0d0"/></svg><svg style="left:37px;top:695px;" width="6" height="6" viewBox="0 0 6 6"><path d="M6,0 V6 H0Z" fill="#e8e8e8"/></svg><svg style="left:21px;top:712px;" width="22" height="20" viewBox="0 0 22 20"><rect x="2" y="7" width="17" height="6" fill="#e8c840" transform="rotate(-40 10.5 10)"/><path d="M6,13 L8,15 M9,10 L11,12 M12,7 L14,9" stroke="#5a4a10" stroke-width="1"/></svg><svg style="left:37px;top:726px;" width="6" height="6" viewBox="0 0 6 6"><path d="M6,0 V6 H0Z" fill="#e8e8e8"/></svg><svg style="left:21px;top:743px;" width="22" height="20" viewBox="0 0 22 20"><circle cx="12" cy="8" r="6" fill="#90c8f0" stroke="#e0e0e0" stroke-width="1.5"/><path d="M3,18 L8,13" stroke="#c89060" stroke-width="3"/></svg><svg style="left:37px;top:757px;" width="6" height="6" viewBox="0 0 6 6"><path d="M6,0 V6 H0Z" fill="#e8e8e8"/></svg><svg style="left:16px;top:793px;" width="30" height="48" viewBox="0 0 30 48"><circle cx="15" cy="25" r="12" fill="#e8e8e8" stroke="#2a2a2a" stroke-width="1.5"/><circle cx="15" cy="25" r="5.5" fill="#3a3a3a"/><path d="M5,31 L10,28" stroke="#d02020" stroke-width="3"/><circle cx="15" cy="17" r="12" fill="#f0f0f0" stroke="#2a2a2a" stroke-width="1.5"/><circle cx="15" cy="17" r="6" fill="#3a3a3a"/><circle cx="15" cy="17" r="4" fill="#f0f0f0"/><path d="M5,23 L9,20" stroke="#e02a2a" stroke-width="3"/><path d="M10,43 Q15,46 20,43 M18,42 L20,43 L19,45" fill="none" stroke="#9a9a9a" stroke-width="1"/></svg><div style="position:absolute;left:1387px;top:148px;width:265px;height:285px;background:#3e3e3e;border:1px solid #2a2a2a;"></div><div style="position:absolute;left:1388px;top:149px;width:263px;height:30px;background:#2e2e2e;"></div><div style="position:absolute;left:1406px;top:151px;width:56px;height:28px;background:#3c3c3c;"></div><svg style="left:1394px;top:158px;" width="8" height="12" viewBox="0 0 8 12"><path d="M2.5,2V10 M5.5,2V10" stroke="#8a8a8a" stroke-width="1"/></svg><div style="position:absolute;left:1411px;top:157.69px;font-size:11px;line-height:1;white-space:nowrap;color:#f0f0f0;">Symboles</div><svg style="left:1610px;top:157px;" width="12" height="12" viewBox="0 0 12 12"><path d="M0,2H11 M0,6H11 M0,10H11" stroke="#c8c8c8" stroke-width="2"/></svg><svg style="left:1633px;top:156px;" width="14" height="14" viewBox="0 0 14 14"><circle cx="7" cy="7" r="6.2" fill="#d8d8d8"/><path d="M4.5,4.5 L9.5,9.5 M9.5,4.5 L4.5,9.5" stroke="#303030" stroke-width="1.2"/></svg><div style="position:absolute;left:1388px;top:179px;width:263px;height:33px;background:#3a3a3a;"></div><div style="position:absolute;left:1392px;top:183px;width:74px;height:24px;background:#484848;border-radius:2px;"></div><svg style="left:1406px;top:188px;" width="14" height="14" viewBox="0 0 14 14"><circle cx="7" cy="7" r="6" fill="none" stroke="#e8703a" stroke-width="1.7"/><path d="M7,7 Q9.8,6 9.6,2.2" transform="rotate(0 7 7)" fill="none" stroke="#e8703a" stroke-width="1.7" stroke-linecap="round"/><path d="M7,7 Q9.8,6 9.6,2.2" transform="rotate(120 7 7)" fill="none" stroke="#e8703a" stroke-width="1.7" stroke-linecap="round"/><path d="M7,7 Q9.8,6 9.6,2.2" transform="rotate(240 7 7)" fill="none" stroke="#e8703a" stroke-width="1.7" stroke-linecap="round"/></svg><div style="position:absolute;left:1424px;top:189.84px;font-size:12px;line-height:1;white-space:nowrap;color:#f0f0f0;letter-spacing:0.2px;">Créer</div><div style="position:absolute;left:1469px;top:184px;width:94px;height:23px;background:#484848;border-radius:2px;"></div><svg style="left:1483px;top:189px;" width="14" height="14" viewBox="0 0 14 14"><circle cx="7" cy="7" r="6" fill="none" stroke="#e8703a" stroke-width="1.8" stroke-dasharray="8.5,4" transform="rotate(-75 7 7)"/><path d="M7,7 Q9.8,6 9.6,2.2" transform="rotate(0 7 7)" fill="none" stroke="#e8703a" stroke-width="1.7" stroke-linecap="round"/><path d="M7,7 Q9.8,6 9.6,2.2" transform="rotate(120 7 7)" fill="none" stroke="#e8703a" stroke-width="1.7" stroke-linecap="round"/><path d="M7,7 Q9.8,6 9.6,2.2" transform="rotate(240 7 7)" fill="none" stroke="#e8703a" stroke-width="1.7" stroke-linecap="round"/></svg><div style="position:absolute;left:1502px;top:190.84px;font-size:12px;line-height:1;white-space:nowrap;color:#f0f0f0;letter-spacing:0.1px;">Détacher</div><div style="position:absolute;left:1576px;top:190.27px;font-size:11.5px;line-height:1;white-space:nowrap;color:#d8d8d8;letter-spacing:-0.4px;">Sync:</div><div style="position:absolute;left:1606px;top:185px;width:40px;height:21px;background:#2c2c2c;border-radius:2px;"></div><svg style="left:1619px;top:189px;" width="14" height="14" viewBox="0 0 14 14"><rect x="0" y="0" width="14" height="14" fill="#e8703a" rx="1"/><circle cx="7" cy="7" r="6" fill="none" stroke="#2c2c2c" stroke-width="0.9"/><circle cx="7" cy="7" r="4.3" fill="none" stroke="#2c2c2c" stroke-width="0.9"/><circle cx="7" cy="7" r="3.6" fill="#2c2c2c"/><path d="M7,7 Q8.8,6.3 8.8,3.5" transform="rotate(0 7 7)" fill="none" stroke="#e8703a" stroke-width="1.3" stroke-linecap="round"/><path d="M7,7 Q8.8,6.3 8.8,3.5" transform="rotate(120 7 7)" fill="none" stroke="#e8703a" stroke-width="1.3" stroke-linecap="round"/><path d="M7,7 Q8.8,6.3 8.8,3.5" transform="rotate(240 7 7)" fill="none" stroke="#e8703a" stroke-width="1.3" stroke-linecap="round"/></svg><div style="position:absolute;left:1390px;top:216px;width:74px;height:89px;background:#434343;border-radius:2px;"></div><svg style="left:1395px;top:221px" width="64" height="64" viewBox="0 0 337 337"><rect width="337" height="337" fill="#454545"/><g style="opacity:0.55"><use href="#tileg"/></g></svg><div style="position:absolute;left:1395px;top:287.84px;font-size:12px;line-height:1;white-space:nowrap;color:#ffffff;letter-spacing:-0.3px;">Carré de b...</div><div style="position:absolute;left:1658px;top:115px;width:5px;height:947px;background:#3a3a3a;"></div><div style="position:absolute;left:1663px;top:115px;width:265px;height:30px;background:#2e2e2e;"></div><svg style="left:1666px;top:124.0px;" width="8" height="12" viewBox="0 0 8 12"><path d="M3.5,2V10 M6.5,2V10" stroke="#8a8a8a" stroke-width="1"/></svg><div style="position:absolute;left:1705.0px;top:123.19px;font-size:11px;line-height:1;white-space:nowrap;color:#dcdcdc;transform:translateX(-50%);">Couleur</div><div style="position:absolute;left:1763.5px;top:123.19px;font-size:11px;line-height:1;white-space:nowrap;color:#dcdcdc;transform:translateX(-50%);">Échantillons</div><div style="position:absolute;left:1797px;top:116px;width:31px;height:29px;background:#3e3e3e;"></div><div style="position:absolute;left:1812.5px;top:123.19px;font-size:11px;line-height:1;white-space:nowrap;color:#f0f0f0;transform:translateX(-50%);">Trait</div><div style="position:absolute;left:1859.0px;top:123.19px;font-size:11px;line-height:1;white-space:nowrap;color:#dcdcdc;transform:translateX(-50%);">Apparence</div><svg style="left:1909px;top:124.0px;" width="12" height="12" viewBox="0 0 12 12"><path d="M0,2H11 M0,6H11 M0,10H11" stroke="#c8c8c8" stroke-width="2"/></svg><div style="position:absolute;left:1663px;top:145px;width:265px;height:300px;background:#3e3e3e;"></div><div style="position:absolute;left:1670px;top:156.69px;font-size:11px;line-height:1;white-space:nowrap;color:#dcdcdc;">Style:</div><div style="position:absolute;left:1723px;top:153px;width:26px;height:20px;background:#2a2a2a;"></div><div style="position:absolute;left:1750px;top:153px;width:26px;height:20px;background:#4a4a4a;"></div><div style="position:absolute;left:1777px;top:153px;width:26px;height:20px;background:#4a4a4a;"></div><div style="position:absolute;left:1804px;top:153px;width:26px;height:20px;background:#4a4a4a;"></div><svg style="left:1727px;top:154px;" width="18" height="18" viewBox="0 0 18 18"><circle cx="9" cy="9" r="6.5" fill="none" stroke="#e0e0e0" stroke-width="1.2"/><path d="M6.5,6.5 L11.5,11.5 M11.5,6.5 L6.5,11.5" stroke="#e0e0e0" stroke-width="1.1"/></svg><svg style="left:1754px;top:154px;" width="18" height="18" viewBox="0 0 18 18"><path d="M3,15 L15,3" stroke="#e0e0e0" stroke-width="1.6"/></svg><svg style="left:1781px;top:154px;" width="18" height="18" viewBox="0 0 18 18"><path d="M3,15 L15,3" stroke="#e0e0e0" stroke-width="1.6" stroke-dasharray="2.2,2"/></svg><svg style="left:1808px;top:154px;" width="18" height="18" viewBox="0 0 18 18"><path d="M15,2 Q16,3 11,9 L9,7 Q14,2 15,2Z M8,8 L10,10 Q9,14 4,14 Q6,12 6,10 Q6,8 8,8Z" fill="#e0e0e0"/></svg><div style="position:absolute;left:1670px;top:184.69px;font-size:11px;line-height:1;white-space:nowrap;color:#dcdcdc;">Largeur:</div><div style="position:absolute;left:1724px;top:186px;width:146px;height:6px;background:#2a2a2a;border-radius:3px;"></div><svg style="left:1723px;top:184px;" width="11" height="11" viewBox="0 0 11 11"><circle cx="5.5" cy="5.5" r="5" fill="#e8e8e8"/></svg><div style="position:absolute;left:1873px;top:180px;width:50px;height:20px;background:#2a2a2a;border-radius:3px;"></div><div style="position:absolute;left:1878px;top:184.69px;font-size:11px;line-height:1;white-space:nowrap;color:#f0f0f0;font-weight:bold;letter-spacing:-0.2px;">0 pt</div><div style="position:absolute;left:1670px;top:208.69px;font-size:11px;line-height:1;white-space:nowrap;color:#dcdcdc;letter-spacing:-0.3px;">Extrémité:</div><div style="position:absolute;left:1723px;top:205px;width:26px;height:20px;background:#4a4a4a;"></div><div style="position:absolute;left:1750px;top:205px;width:26px;height:20px;background:#2a2a2a;"></div><div style="position:absolute;left:1777px;top:205px;width:26px;height:20px;background:#4a4a4a;"></div><svg style="left:1723px;top:205px;" width="26" height="20" viewBox="0 0 26 20"><path d="M5,4 H15.5 A5.5,5.5 0 0 1 15.5,15 H5Z" fill="#dcdcdc"/><path d="M5,9.5 H14" stroke="#3a3a3a" stroke-width="1"/><rect x="13" y="8" width="3" height="3" fill="#3a3a3a"/></svg><svg style="left:1750px;top:205px;" width="26" height="20" viewBox="0 0 26 20"><rect x="5" y="4" width="13" height="11" fill="#dcdcdc"/><rect x="17.5" y="7.5" width="3.5" height="4" fill="#2e2e2e" stroke="#dcdcdc" stroke-width="1"/><path d="M5,9.5 H18" stroke="#2e2e2e" stroke-width="1"/><rect x="17" y="8" width="3" height="3" fill="#2e2e2e"/></svg><svg style="left:1777px;top:205px;" width="26" height="20" viewBox="0 0 26 20"><rect x="5" y="4" width="16" height="11" fill="#dcdcdc"/><path d="M5,9.5 H14" stroke="#3a3a3a" stroke-width="1"/><rect x="13" y="8" width="3" height="3" fill="#3a3a3a"/></svg><div style="position:absolute;left:1670px;top:235.69px;font-size:11px;line-height:1;white-space:nowrap;color:#dcdcdc;">Angle:</div><div style="position:absolute;left:1723px;top:231px;width:26px;height:20px;background:#2a2a2a;"></div><div style="position:absolute;left:1750px;top:231px;width:26px;height:20px;background:#4a4a4a;"></div><div style="position:absolute;left:1777px;top:231px;width:26px;height:20px;background:#4a4a4a;"></div><svg style="left:1723px;top:231px;" width="26" height="20" viewBox="0 0 26 20"><path d="M9,3 H14 V10 H20 V15 Q9,15 9,3Z" fill="#a0a0a0"/><path d="M6.5,3 Q6.5,17 20,17" fill="none" stroke="#dcdcdc" stroke-width="1.6"/></svg><svg style="left:1750px;top:231px;" width="26" height="20" viewBox="0 0 26 20"><path d="M9,3 H14 V10 H20 V15 H13.5 L9,10.5Z" fill="#a0a0a0"/><path d="M6.5,3 V9.5 L13,16.8 H20" fill="none" stroke="#dcdcdc" stroke-width="1.6"/></svg><svg style="left:1777px;top:231px;" width="26" height="20" viewBox="0 0 26 20"><path d="M9,3 H14 V10 H20 V15 H9Z" fill="#a0a0a0"/><path d="M6.5,3 V17 H20" fill="none" stroke="#dcdcdc" stroke-width="1.6"/></svg><div style="position:absolute;left:1843px;top:234.69px;font-size:11px;line-height:1;white-space:nowrap;color:#dcdcdc;letter-spacing:-0.3px;">Carré:</div><div style="position:absolute;left:1873px;top:229px;width:50px;height:20px;background:#2a2a2a;border-radius:3px;"></div><div style="position:absolute;left:1878px;top:233.69px;font-size:11px;line-height:1;white-space:nowrap;color:#f0f0f0;font-weight:bold;">2</div><div style="position:absolute;left:1670px;top:260.69px;font-size:11px;line-height:1;white-space:nowrap;color:#dcdcdc;letter-spacing:-0.3px;">Aligner:</div><div style="position:absolute;left:1723px;top:257px;width:26px;height:20px;background:#2a2a2a;"></div><div style="position:absolute;left:1750px;top:257px;width:26px;height:20px;background:#4a4a4a;"></div><div style="position:absolute;left:1777px;top:257px;width:26px;height:20px;background:#4a4a4a;"></div><svg style="left:1723px;top:257px;" width="26" height="20" viewBox="0 0 26 20"><path d="M7,4 H20 V9 H14 V17 H7Z" fill="#dcdcdc"/><path d="M9.5,6.8 H20 M9.5,6.8 V17" stroke="#2e2e2e" stroke-width="1.1"/><rect x="8.5" y="5.5" width="2.6" height="2.6" fill="#2e2e2e"/></svg><svg style="left:1750px;top:257px;" width="26" height="20" viewBox="0 0 26 20"><path d="M10,7 H20 V12 H15 V17 H10Z" fill="#dcdcdc"/><path d="M7.5,17 V4.5 H20" fill="none" stroke="#dcdcdc" stroke-width="1"/><rect x="7" y="4" width="3" height="3" fill="#4a4a4a" stroke="#dcdcdc" stroke-width="0.8"/></svg><svg style="left:1777px;top:257px;" width="26" height="20" viewBox="0 0 26 20"><path d="M7,4 H20 V12 H13 V17 H7Z" fill="#dcdcdc"/><path d="M11.5,10.5 H20 M11.5,10.5 V17" stroke="#4a4a4a" stroke-width="1"/><rect x="10.5" y="8.5" width="2.6" height="2.6" fill="#4a4a4a"/></svg><div style="position:absolute;left:1667px;top:287px;width:257px;height:1px;background:#2c2c2c;"></div><div style="position:absolute;left:1670px;top:305.69px;font-size:11px;line-height:1;white-space:nowrap;color:#dcdcdc;">Ordre:</div><div style="position:absolute;left:1723px;top:302px;width:26px;height:20px;background:#4a4a4a;"></div><div style="position:absolute;left:1750px;top:302px;width:26px;height:20px;background:#2a2a2a;"></div><svg style="left:1727px;top:304px;" width="18" height="16" viewBox="0 0 18 16"><path d="M4,11 V3 H11" fill="none" stroke="#e8e8e8" stroke-width="1.5"/><rect x="7" y="6" width="8" height="8" fill="#a8a8a8"/></svg><svg style="left:1754px;top:304px;" width="18" height="16" viewBox="0 0 18 16"><rect x="3.5" y="2.5" width="8" height="8" fill="none" stroke="#e8e8e8" stroke-width="1.5"/><rect x="6" y="5" width="3" height="3" fill="#e8e8e8"/><path d="M14,6 V14 H6" fill="none" stroke="#a8a8a8" stroke-width="1.5"/></svg><div style="position:absolute;left:1780px;top:304px;width:12px;height:12px;background:#2a2a2a;border-radius:2px;"></div><div style="position:absolute;left:1797px;top:304.69px;font-size:11px;line-height:1;white-space:nowrap;color:#dcdcdc;width:125px;overflow:hidden;letter-spacing:-0.1px;">Mettre à l'échelle de l'objet</div><div style="position:absolute;left:1667px;top:332px;width:257px;height:1px;background:#2c2c2c;"></div><div style="position:absolute;left:1670px;top:350.69px;font-size:11px;line-height:1;white-space:nowrap;color:#8e8e8e;">Début:</div><div style="position:absolute;left:1722px;top:346px;width:45px;height:21px;background:#383838;border-radius:2px;"></div><div style="position:absolute;left:1771px;top:346px;width:65px;height:21px;background:#383838;border-radius:2px;"></div><div style="position:absolute;left:1733px;top:356px;width:18px;height:2px;background:#e0e0e0;"></div><svg style="left:1753px;top:352px;" width="10" height="10" viewBox="0 0 10 10"><path d="M2,3.5 L5,6.5 L8,3.5" fill="none" stroke="#a8a8a8" stroke-width="1"/></svg><div style="position:absolute;left:1777px;top:352.69px;font-size:11px;line-height:1;white-space:nowrap;color:#8e8e8e;">100 %</div><svg style="left:1825px;top:352px;" width="10" height="10" viewBox="0 0 10 10"><path d="M2,3.5 L5,6.5 L8,3.5" fill="none" stroke="#a8a8a8" stroke-width="1"/></svg><div style="position:absolute;left:1670px;top:376.69px;font-size:11px;line-height:1;white-space:nowrap;color:#8e8e8e;">Fin:</div><div style="position:absolute;left:1722px;top:373px;width:45px;height:21px;background:#383838;border-radius:2px;"></div><div style="position:absolute;left:1771px;top:373px;width:65px;height:21px;background:#383838;border-radius:2px;"></div><div style="position:absolute;left:1727px;top:382px;width:18px;height:2px;background:#e0e0e0;"></div><svg style="left:1753px;top:378px;" width="10" height="10" viewBox="0 0 10 10"><path d="M2,3.5 L5,6.5 L8,3.5" fill="none" stroke="#a8a8a8" stroke-width="1"/></svg><div style="position:absolute;left:1777px;top:378.69px;font-size:11px;line-height:1;white-space:nowrap;color:#8e8e8e;">100 %</div><svg style="left:1825px;top:378px;" width="10" height="10" viewBox="0 0 10 10"><path d="M2,3.5 L5,6.5 L8,3.5" fill="none" stroke="#a8a8a8" stroke-width="1"/></svg><svg style="left:1838px;top:357px;" width="10" height="22" viewBox="0 0 10 22"><rect x="2" y="1" width="5" height="8" rx="1" fill="none" stroke="#6a6a6a" stroke-width="1"/><rect x="2" y="13" width="5" height="8" rx="1" fill="none" stroke="#6a6a6a" stroke-width="1"/><path d="M0,11 H9" stroke="#5a5a5a" stroke-dasharray="1.5,1"/></svg><div style="position:absolute;left:1869px;top:347px;width:27px;height:20px;background:#2e2e2e;border-radius:2px 0 0 2px;"></div><div style="position:absolute;left:1896px;top:347px;width:26px;height:20px;background:#4a4a4a;border-radius:0 2px 2px 0;"></div><svg style="left:1874px;top:349px;" width="18" height="16" viewBox="0 0 18 16"><path d="M2,8 H12 M9,5 L12,8 L9,11 M14,3 V13" fill="none" stroke="#a8a8a8" stroke-width="1.3"/></svg><svg style="left:1900px;top:349px;" width="18" height="16" viewBox="0 0 18 16"><path d="M2,8 H15 M12,5 L15,8 L12,11 M8,3 V13" fill="none" stroke="#8a8a8a" stroke-width="1.3"/></svg><div style="position:absolute;left:1870px;top:374px;width:24px;height:18px;background:#444444;border-radius:2px;"></div><div style="position:absolute;left:1897px;top:374px;width:24px;height:18px;background:#444444;border-radius:2px;"></div><svg style="left:1874px;top:375px;" width="16" height="16" viewBox="0 0 16 16"><path d="M3,6 H12 L10,4 M13,10 H4 L6,12 M3,6 Q1,8 3,10 M13,10 Q15,8 13,6" fill="none" stroke="#8a8a8a" stroke-width="1.1"/></svg><svg style="left:1901px;top:375px;" width="16" height="16" viewBox="0 0 16 16"><circle cx="8" cy="8" r="5.5" fill="none" stroke="#8a8a8a" stroke-width="1.1" stroke-dasharray="5,2"/><path d="M6,6 L10,10 M10,6 L6,10" stroke="#8a8a8a" stroke-width="1"/></svg><div style="position:absolute;left:1667px;top:403px;width:257px;height:1px;background:#2c2c2c;"></div><div style="position:absolute;left:1670px;top:421px;width:81px;height:21px;background:#4a4a4a;border-radius:3px;"></div><div style="position:absolute;left:1679px;top:425.84px;font-size:12px;line-height:1;white-space:nowrap;color:#f0f0f0;letter-spacing:-0.2px;">Propriétés...</div><div style="position:absolute;left:1757px;top:426.69px;font-size:11px;line-height:1;white-space:nowrap;color:#dcdcdc;letter-spacing:-0.2px;">Pression:</div><div style="position:absolute;left:1805px;top:422px;width:79px;height:19px;background:#555555;border-radius:2px;"></div><div style="position:absolute;left:1807px;top:423px;width:75px;height:1px;background:#c8c8c8;"></div><div style="position:absolute;left:1663px;top:445px;width:265px;height:15px;background:#3e3e3e;"></div><div style="position:absolute;left:1663px;top:460px;width:265px;height:30px;background:#2e2e2e;"></div><svg style="left:1666px;top:469.0px;" width="8" height="12" viewBox="0 0 8 12"><path d="M3.5,2V10 M6.5,2V10" stroke="#8a8a8a" stroke-width="1"/></svg><div style="position:absolute;left:1681px;top:461px;width:48px;height:29px;background:#3e3e3e;"></div><div style="position:absolute;left:1705.0px;top:468.19px;font-size:11px;line-height:1;white-space:nowrap;color:#f0f0f0;transform:translateX(-50%);">Calques</div><div style="position:absolute;left:1755.5px;top:468.19px;font-size:11px;line-height:1;white-space:nowrap;color:#dcdcdc;transform:translateX(-50%);">Pinceaux</div><div style="position:absolute;left:1819.5px;top:468.19px;font-size:11px;line-height:1;white-space:nowrap;color:#dcdcdc;transform:translateX(-50%);">Effets rapides</div><div style="position:absolute;left:1876.0px;top:468.19px;font-size:11px;line-height:1;white-space:nowrap;color:#dcdcdc;transform:translateX(-50%);">Styles</div><svg style="left:1909px;top:469.0px;" width="12" height="12" viewBox="0 0 12 12"><path d="M0,2H11 M0,6H11 M0,10H11" stroke="#c8c8c8" stroke-width="2"/></svg><div style="position:absolute;left:1663px;top:490px;width:265px;height:29px;background:#3b3b3b;"></div><div style="position:absolute;left:1670px;top:499.69px;font-size:11px;line-height:1;white-space:nowrap;color:#d8d8d8;letter-spacing:-0.3px;">Opacité:</div><div style="position:absolute;left:1711px;top:494px;width:55px;height:20px;background:#262626;border-radius:3px;"></div><div style="position:absolute;left:1717px;top:498.69px;font-size:11px;line-height:1;white-space:nowrap;color:#f0f0f0;letter-spacing:-0.1px;">100 %</div><svg style="left:1752px;top:499px;" width="10" height="10" viewBox="0 0 10 10"><path d="M2,3.5 L5,6.5 L8,3.5" fill="none" stroke="#e0e0e0" stroke-width="1.1"/></svg><div style="position:absolute;left:1771px;top:495px;width:108px;height:18px;background:#494949;border-radius:2px;"></div><div style="position:absolute;left:1775px;top:498.84px;font-size:12px;line-height:1;white-space:nowrap;color:#f0f0f0;letter-spacing:-0.35px;">Intermédiaire</div><svg style="left:1864px;top:499px;" width="10" height="10" viewBox="0 0 10 10"><path d="M2,3.5 L5,6.5 L8,3.5" fill="none" stroke="#e0e0e0" stroke-width="1.1"/></svg><svg style="left:1884px;top:498px;" width="13" height="13" viewBox="0 0 13 13"><circle cx="6.5" cy="6.5" r="3.8" fill="none" stroke="#8a8a8a" stroke-width="2.2"/><path d="M6.5,0.5V3 M6.5,10V12.5 M0.5,6.5H3 M10,6.5H12.5 M2.3,2.3L4,4 M9,9L10.7,10.7 M2.3,10.7L4,9 M9,4L10.7,2.3" stroke="#8a8a8a" stroke-width="1.8"/></svg><svg style="left:1907px;top:496px;" width="11" height="15" viewBox="0 0 11 15"><path d="M2.5,7 V4.5 A3,3 0 0 1 8.5,4.5" fill="none" stroke="#8a8a8a" stroke-width="1.5"/><rect x="1" y="7" width="9" height="7" fill="#8a8a8a"/></svg><div style="position:absolute;left:1663px;top:519px;width:265px;height:201px;background:#343434;"></div><div style="position:absolute;left:1663px;top:519px;width:248px;height:197px;background:#0e0e0e;"></div><div style="position:absolute;left:1664px;top:520px;width:16px;height:48px;background:#5a7496;"></div><div style="position:absolute;left:1681px;top:520px;width:2px;height:48px;background:#ff7a10;"></div><div style="position:absolute;left:1683px;top:520px;width:46px;height:48px;background:#5a7496;"></div><div style="position:absolute;left:1730px;top:520px;width:180px;height:48px;background:#5a7496;"></div><svg style="left:1683px;top:522px" width="44" height="44" viewBox="0 0 337 337" preserveAspectRatio="none"><rect width="337" height="337" fill="#a0a0a0"/><use href="#tileg2"/></svg><svg style="left:1666px;top:531px;" width="12" height="26" viewBox="0 0 12 26"><circle cx="6" cy="6" r="3.6" fill="none" stroke="#8aa0bc" stroke-width="1"/><path d="M6,6 L6,3 M6,6 L4,8 M6,6 L8,8" stroke="#8aa0bc" stroke-width="0.8"/><path d="M4,14 L7,17 L4,20" fill="none" stroke="#a8bcd4" stroke-width="1.1"/></svg><div style="position:absolute;left:1733px;top:538.84px;font-size:12px;line-height:1;white-space:nowrap;color:#f4f4f4;letter-spacing:-0.2px;">Carré de base</div><svg style="left:1887px;top:537px;" width="12" height="12" viewBox="0 0 12 12"><circle cx="6" cy="6" r="4.6" fill="#b8b8b8"/></svg><div style="position:absolute;left:1664px;top:569px;width:16px;height:48px;background:#5a7496;"></div><div style="position:absolute;left:1681px;top:569px;width:2px;height:48px;background:#ff7a10;"></div><div style="position:absolute;left:1683px;top:569px;width:46px;height:48px;background:#5a7496;"></div><div style="position:absolute;left:1730px;top:569px;width:180px;height:48px;background:#5a7496;"></div><svg style="left:1683px;top:571px" width="44" height="44" viewBox="0 0 337 337" preserveAspectRatio="none"><rect width="337" height="337" fill="#a0a0a0"/><use href="#tileg2"/></svg><svg style="left:1666px;top:580px;" width="12" height="26" viewBox="0 0 12 26"><circle cx="6" cy="6" r="3.6" fill="none" stroke="#8aa0bc" stroke-width="1"/><path d="M6,6 L6,3 M6,6 L4,8 M6,6 L8,8" stroke="#8aa0bc" stroke-width="0.8"/><path d="M4,14 L7,17 L4,20" fill="none" stroke="#a8bcd4" stroke-width="1.1"/></svg><div style="position:absolute;left:1733px;top:587.84px;font-size:12px;line-height:1;white-space:nowrap;color:#f4f4f4;letter-spacing:-0.2px;">Carré de base</div><svg style="left:1887px;top:586px;" width="12" height="12" viewBox="0 0 12 12"><circle cx="6" cy="6" r="4.6" fill="#b8b8b8"/></svg><div style="position:absolute;left:1664px;top:618px;width:16px;height:48px;background:#5a7496;"></div><div style="position:absolute;left:1681px;top:618px;width:2px;height:48px;background:#ff7a10;"></div><div style="position:absolute;left:1683px;top:618px;width:46px;height:48px;background:#5a7496;"></div><div style="position:absolute;left:1730px;top:618px;width:180px;height:48px;background:#5a7496;"></div><svg style="left:1683px;top:620px" width="44" height="44" viewBox="0 0 337 337" preserveAspectRatio="none"><rect width="337" height="337" fill="#a0a0a0"/><use href="#tileg2"/></svg><svg style="left:1666px;top:629px;" width="12" height="26" viewBox="0 0 12 26"><circle cx="6" cy="6" r="3.6" fill="none" stroke="#8aa0bc" stroke-width="1"/><path d="M6,6 L6,3 M6,6 L4,8 M6,6 L8,8" stroke="#8aa0bc" stroke-width="0.8"/><path d="M4,14 L7,17 L4,20" fill="none" stroke="#a8bcd4" stroke-width="1.1"/></svg><div style="position:absolute;left:1733px;top:636.84px;font-size:12px;line-height:1;white-space:nowrap;color:#f4f4f4;letter-spacing:-0.2px;">Carré de base</div><svg style="left:1887px;top:635px;" width="12" height="12" viewBox="0 0 12 12"><circle cx="6" cy="6" r="4.6" fill="#b8b8b8"/></svg><div style="position:absolute;left:1664px;top:667px;width:16px;height:48px;background:#5a7496;"></div><div style="position:absolute;left:1681px;top:667px;width:2px;height:48px;background:#ff7a10;"></div><div style="position:absolute;left:1683px;top:667px;width:46px;height:48px;background:#5a7496;"></div><div style="position:absolute;left:1730px;top:667px;width:180px;height:48px;background:#5a7496;"></div><svg style="left:1683px;top:669px" width="44" height="44" viewBox="0 0 337 337" preserveAspectRatio="none"><rect width="337" height="337" fill="#a0a0a0"/><use href="#tileg2"/></svg><svg style="left:1666px;top:678px;" width="12" height="26" viewBox="0 0 12 26"><circle cx="6" cy="6" r="3.6" fill="none" stroke="#8aa0bc" stroke-width="1"/><path d="M6,6 L6,3 M6,6 L4,8 M6,6 L8,8" stroke="#8aa0bc" stroke-width="0.8"/><path d="M4,14 L7,17 L4,20" fill="none" stroke="#a8bcd4" stroke-width="1.1"/></svg><div style="position:absolute;left:1733px;top:685.84px;font-size:12px;line-height:1;white-space:nowrap;color:#f4f4f4;letter-spacing:-0.2px;">Carré de base</div><svg style="left:1887px;top:684px;" width="12" height="12" viewBox="0 0 12 12"><circle cx="6" cy="6" r="4.6" fill="#b8b8b8"/></svg><div style="position:absolute;left:1663px;top:716px;width:265px;height:31px;background:#3b3b3b;"></div><div style="position:absolute;left:1668px;top:724px;width:21px;height:20px;background:#2e2e2e;"></div><svg style="left:1669px;top:725px;" width="20" height="19" viewBox="0 0 20 19"><rect x="2.5" y="2.5" width="9" height="9" fill="none" stroke="#b8b8b8" stroke-width="1.3"/><path d="M13.5,6 V13.5 H6 M16,8.5 V16 H8.5" fill="none" stroke="#8a8a8a" stroke-width="1.1"/></svg><svg style="left:1762px;top:725px;" width="18" height="18" viewBox="0 0 18 18"><rect x="2" y="3" width="14" height="12" fill="#9a9a9a"/><circle cx="9" cy="9" r="3.6" fill="#3b3b3b"/></svg><svg style="left:1782px;top:725px;" width="18" height="18" viewBox="0 0 18 18"><circle cx="9" cy="9" r="7.2" fill="none" stroke="#9a9a9a" stroke-width="1.2"/><path d="M13.5,5.5 A6,6 0 0 1 5.5,13.5Z" fill="#9a9a9a"/></svg><svg style="left:1802px;top:725px;" width="18" height="18" viewBox="0 0 18 18"><path d="M2,2 H16 M2,16 H16" stroke="#9a9a9a" stroke-width="1"/><path d="M4,14 V5 H9 M4,9 H8 M10,5 L15,14 M15,5 L10,14" stroke="#9a9a9a" stroke-width="1.7" fill="none"/></svg><svg style="left:1822px;top:725px;" width="18" height="18" viewBox="0 0 18 18"><path d="M3,15 L5,4 Q10,2 15,4 L16,15Z" fill="none" stroke="#8a8a8a" stroke-width="1"/><path d="M7,3.5 L6,15 M11,3 L11.5,15 M4,8 H15 M3.5,12 H15.5" stroke="#8a8a8a" stroke-width="0.9"/></svg><svg style="left:1865px;top:725px;" width="18" height="18" viewBox="0 0 18 18"><path d="M3,3 H11 M3,3 V16 H14 V8" fill="none" stroke="#9a9a9a" stroke-width="1.1"/><path d="M5,9H12 M5,11.5H12 M5,14H12" stroke="#9a9a9a" stroke-width="1.4"/><path d="M14,1 V6 M11.5,3.5 H16.5" stroke="#9a9a9a" stroke-width="1.1"/></svg><svg style="left:1884px;top:725px;" width="18" height="18" viewBox="0 0 18 18"><rect x="3.5" y="2.5" width="11" height="14" fill="none" stroke="#9a9a9a" stroke-width="1.1"/><rect x="5" y="4.0" width="2.2" height="2.2" fill="#9a9a9a"/><rect x="8" y="6.5" width="2.2" height="2.2" fill="#9a9a9a"/><rect x="5" y="9.0" width="2.2" height="2.2" fill="#9a9a9a"/><rect x="8" y="11.5" width="2.2" height="2.2" fill="#9a9a9a"/><rect x="5" y="14.0" width="2.2" height="2.2" fill="#9a9a9a"/><rect x="11" y="4.0" width="2.2" height="2.2" fill="#9a9a9a"/><rect x="8" y="6.5" width="2.2" height="2.2" fill="#9a9a9a"/><rect x="11" y="9.0" width="2.2" height="2.2" fill="#9a9a9a"/><rect x="8" y="11.5" width="2.2" height="2.2" fill="#9a9a9a"/><rect x="11" y="14.0" width="2.2" height="2.2" fill="#9a9a9a"/></svg><svg style="left:1904px;top:725px;" width="18" height="18" viewBox="0 0 18 18"><path d="M3,4 H15 M7,4 V2 H11 V4 M4.5,4 L5.5,16.5 H12.5 L13.5,4 M7.3,6.5V14.5 M9,6.5V14.5 M10.7,6.5V14.5" fill="none" stroke="#9a9a9a" stroke-width="1.1"/></svg><div style="position:absolute;left:1663px;top:748px;width:265px;height:29px;background:#2e2e2e;"></div><svg style="left:1666px;top:756.5px;" width="8" height="12" viewBox="0 0 8 12"><path d="M3.5,2V10 M6.5,2V10" stroke="#8a8a8a" stroke-width="1"/></svg><div style="position:absolute;left:1715.0px;top:755.69px;font-size:11px;line-height:1;white-space:nowrap;color:#dcdcdc;transform:translateX(-50%);">Transformer</div><div style="position:absolute;left:1781.0px;top:755.69px;font-size:11px;line-height:1;white-space:nowrap;color:#dcdcdc;transform:translateX(-50%);">Navigateur</div><div style="position:absolute;left:1812px;top:749px;width:60px;height:28px;background:#3e3e3e;"></div><div style="position:absolute;left:1842.0px;top:755.69px;font-size:11px;line-height:1;white-space:nowrap;color:#f0f0f0;transform:translateX(-50%);">Historique</div><svg style="left:1909px;top:756.5px;" width="12" height="12" viewBox="0 0 12 12"><path d="M0,2H11 M0,6H11 M0,10H11" stroke="#c8c8c8" stroke-width="2"/></svg><div style="position:absolute;left:1663px;top:777px;width:265px;height:285px;background:#3e3e3e;"></div><div style="position:absolute;left:1670px;top:787.69px;font-size:11px;line-height:1;white-space:nowrap;color:#d8d8d8;letter-spacing:-0.3px;">Position:</div><div style="position:absolute;left:1726px;top:789px;width:192px;height:6px;background:#2a2a2a;border-radius:3px;"></div><div style="position:absolute;left:1726px;top:789px;width:57px;height:6px;background:#5a7eac;border-radius:3px 0 0 3px;"></div><svg style="left:1776px;top:786px;" width="12" height="12" viewBox="0 0 12 12"><circle cx="6" cy="6" r="5.5" fill="#e4e4e4"/></svg><div style="position:absolute;left:1663px;top:807px;width:247px;height:254px;overflow:hidden;"><div style="position:absolute;left:0;top:0px;width:247px;height:22px;background:#434343;"></div><div style="position:absolute;left:4px;top:5.8px;font-size:12px;line-height:1;white-space:nowrap;color:#f2f2f2;letter-spacing:0px;">Transformer</div><div style="position:absolute;left:0;top:22px;width:247px;height:22px;background:#3b3b3b;"></div><div style="position:absolute;left:4px;top:27.8px;font-size:12px;line-height:1;white-space:nowrap;color:#f2f2f2;letter-spacing:0px;">Transformer</div><div style="position:absolute;left:0;top:44px;width:247px;height:22px;background:#434343;"></div><div style="position:absolute;left:4px;top:49.8px;font-size:12px;line-height:1;white-space:nowrap;color:#f2f2f2;letter-spacing:0px;">Dupliquer</div><div style="position:absolute;left:0;top:66px;width:247px;height:22px;background:#3b3b3b;"></div><div style="position:absolute;left:4px;top:71.8px;font-size:12px;line-height:1;white-space:nowrap;color:#f2f2f2;letter-spacing:0px;">Transformer</div><div style="position:absolute;left:0;top:88px;width:247px;height:22px;background:#434343;"></div><div style="position:absolute;left:4px;top:93.8px;font-size:12px;line-height:1;white-space:nowrap;color:#f2f2f2;letter-spacing:0px;">Définir la sélection active</div><div style="position:absolute;left:0;top:110px;width:247px;height:22px;background:#3b3b3b;"></div><div style="position:absolute;left:4px;top:115.8px;font-size:12px;line-height:1;white-space:nowrap;color:#f2f2f2;letter-spacing:0px;">Dupliquer et transformer</div><div style="position:absolute;left:0;top:132px;width:247px;height:22px;background:#5a7496;"></div><div style="position:absolute;left:4px;top:137.8px;font-size:12px;line-height:1;white-space:nowrap;color:#f2f2f2;letter-spacing:0px;">Définir la sélection active</div><div style="position:absolute;left:0;top:154px;width:247px;height:22px;background:#3b3b3b;"></div><div style="position:absolute;left:4px;top:159.8px;font-size:12px;line-height:1;white-space:nowrap;color:#f2f2f2;letter-spacing:0px;">Retournement horizontal</div><div style="position:absolute;left:0;top:176px;width:247px;height:22px;background:#434343;"></div><div style="position:absolute;left:4px;top:181.8px;font-size:12px;line-height:1;white-space:nowrap;color:#f2f2f2;letter-spacing:0px;">Retournement vertical</div><div style="position:absolute;left:0;top:198px;width:247px;height:22px;background:#3b3b3b;"></div><div style="position:absolute;left:4px;top:203.8px;font-size:12px;line-height:1;white-space:nowrap;color:#f2f2f2;letter-spacing:0px;">Transformer</div><div style="position:absolute;left:0;top:220px;width:247px;height:22px;background:#434343;"></div><div style="position:absolute;left:4px;top:225.8px;font-size:12px;line-height:1;white-space:nowrap;color:#f2f2f2;letter-spacing:0px;">Annuler la sélection</div><div style="position:absolute;left:0;top:242px;width:247px;height:22px;background:#3b3b3b;"></div><div style="position:absolute;left:4px;top:247.8px;font-size:12px;line-height:1;white-space:nowrap;color:#f2f2f2;letter-spacing:0px;">Définir la sélection active</div></div><div style="position:absolute;left:1910px;top:807px;width:18px;height:254px;background:#434343;"></div><svg style="left:1913px;top:811px;" width="12" height="10" viewBox="0 0 12 10"><path d="M2,8 L6,2 L10,8Z" fill="#7a7a7a"/></svg><svg style="left:1914px;top:881px;" width="10" height="10" viewBox="0 0 10 10"><circle cx="5" cy="5" r="4" fill="#8a8a8a"/></svg><svg style="left:1913px;top:1047px;" width="12" height="10" viewBox="0 0 12 10"><path d="M2,2 L6,8 L10,2Z" fill="#7a7a7a"/></svg><svg style="left:1889px;top:1028px;" width="20" height="20" viewBox="0 0 20 20"><path d="M4,2 V17 M2,17 H10 M4,5 Q9,3 12,9 M10,8 L12,10 L14,8 M12,11 V15 L15,12" fill="none" stroke="#9a9a9a" stroke-width="1.1"/></svg></body></html>
